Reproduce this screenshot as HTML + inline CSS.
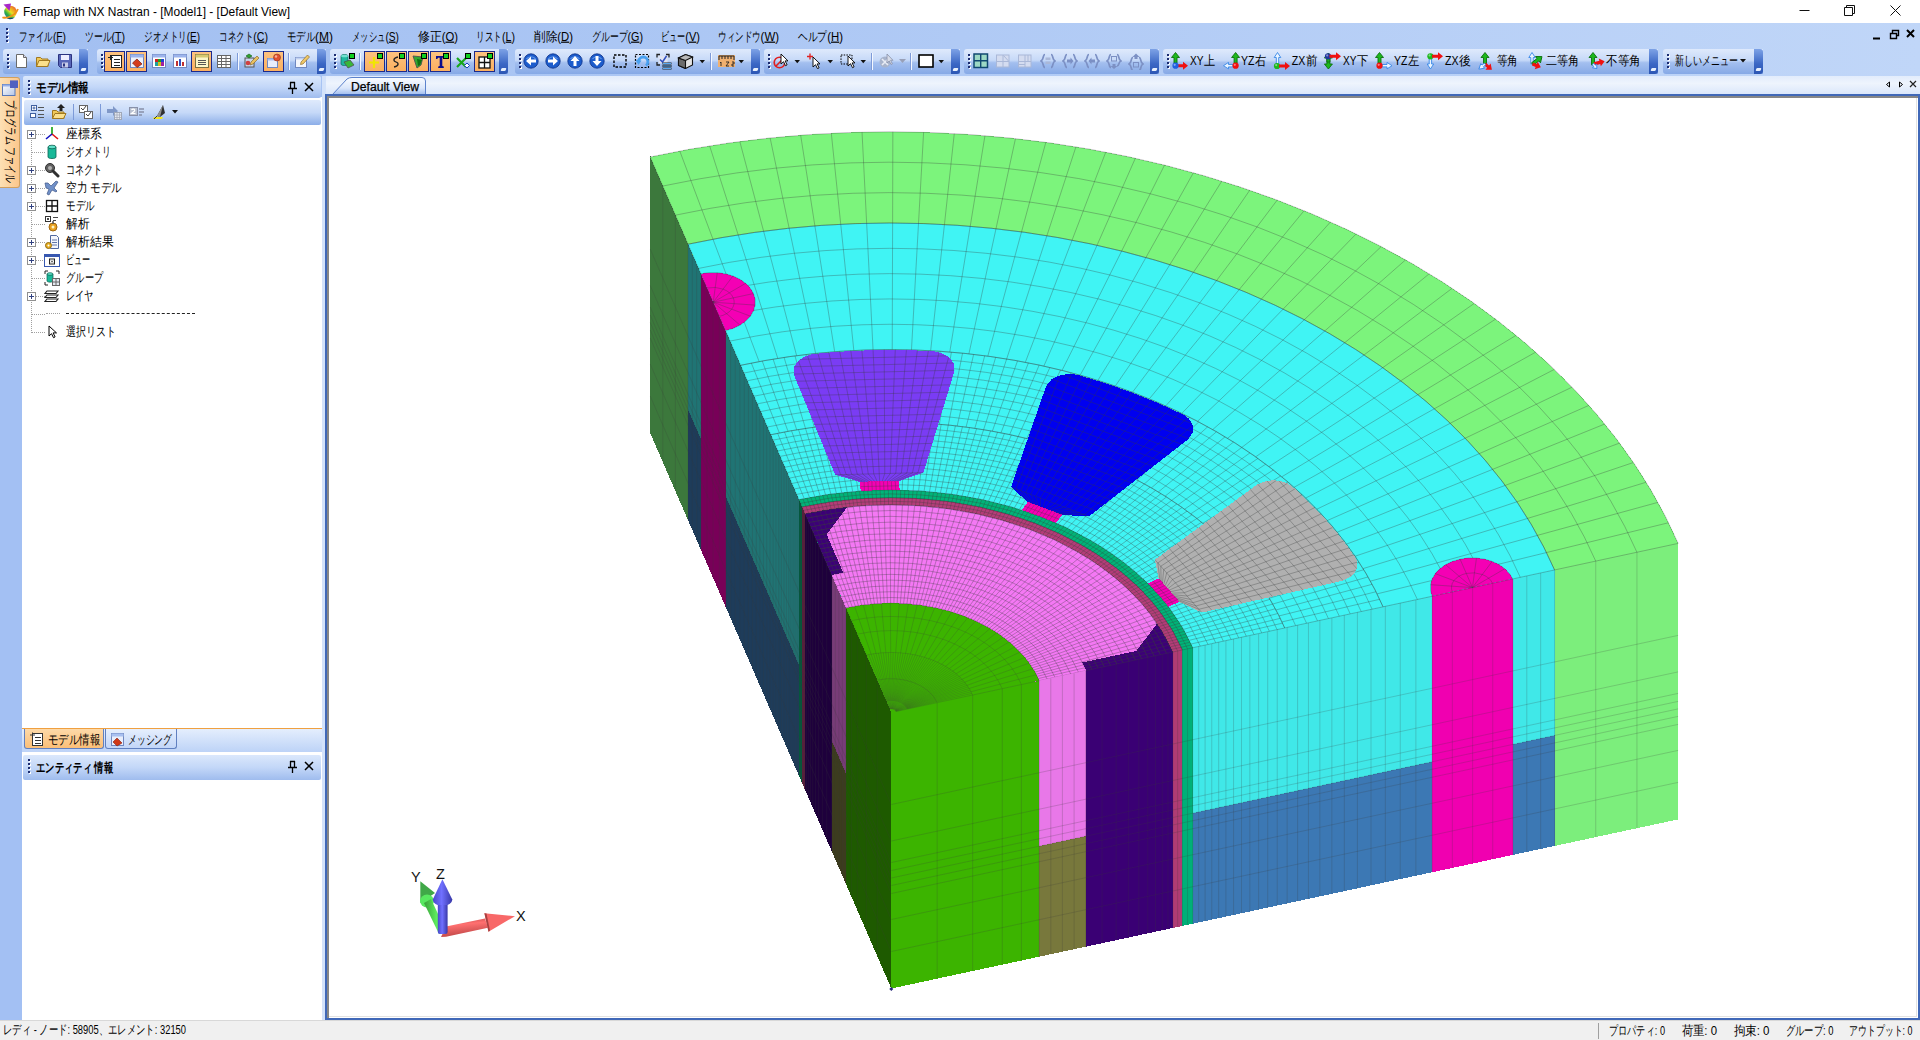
<!DOCTYPE html>
<html lang="ja"><head><meta charset="utf-8"><title>Femap with NX Nastran</title>
<style>
*{box-sizing:border-box;margin:0;padding:0}
html,body{width:1920px;height:1040px;overflow:hidden;background:#fff}
body{font-family:"Liberation Sans",sans-serif;font-size:12px;color:#000;position:relative}
.abs{position:absolute}
#title{left:0;top:0;width:1920px;height:23px;background:#fff}
#title .t{position:absolute;left:23px;top:4px;font-size:12.3px;white-space:nowrap;color:#000}
#frame{left:0;top:23px;width:1920px;height:74px;background:linear-gradient(90deg,#a2bff1 0%,#b0caf5 50%,#c0d6f8 100%)}
#menu{left:0;top:23px;width:1920px;height:24px}
#menu span{position:absolute;top:6px;font-size:12px;white-space:nowrap}
.grip{position:absolute;width:2px;background:repeating-linear-gradient(180deg,#1c2c70 0 2px,transparent 2px 4px);filter:drop-shadow(1px 1px 0 #fff)}
.tb{position:absolute;top:49px;height:25px;border-radius:3px 0 0 3px;background:linear-gradient(180deg,#dfeafc 0%,#c6d9f8 45%,#a3bfef 55%,#86a9e6 100%);}
.tb .cap{position:absolute;right:0;top:0;width:9px;height:25px;border-radius:0 3px 3px 0;background:linear-gradient(180deg,#7da2e6 0%,#3a66c4 60%,#2c56b4 100%)}
.tb .cap:after{content:"";position:absolute;left:2px;bottom:3px;width:5px;height:3px;background:#e8f0fc;border-radius:1px;transform:skewX(-20deg)}
.hl{position:absolute;top:51px;width:21px;height:21px;background:linear-gradient(180deg,#fdc280,#fbb060);border:1px solid #1c2a8c}
.ic{position:absolute;top:53px;width:16px;height:16px}
.tbt{position:absolute;top:55px;font-size:12px;white-space:nowrap}
#lstrip{left:0;top:76px;width:22px;height:944px;background:#a3c0f3}
#ltab{left:0;top:77px;width:20px;height:111px;background:linear-gradient(90deg,#fde0b4,#fbc78c);border:1px solid #d0a060;border-left:none;border-radius:0 3px 3px 0}
.phead{position:absolute;left:23px;width:298px;height:22px;border-radius:2px;background:linear-gradient(180deg,#dbe8fc 0%,#c3d7f8 50%,#9fbcee 100%)}
.phead b{position:absolute;left:13px;top:4px;font-size:12px;font-weight:bold;white-space:nowrap}
#ptool{left:24px;top:100px;width:297px;height:25px;border-radius:2px;background:linear-gradient(180deg,#dfeafc 0%,#c6d9f8 50%,#8caee8 100%)}
#tree{left:22px;top:125px;width:300px;height:604px;background:#fff}
.tr{position:absolute;left:66px;font-size:12.5px;white-space:nowrap}
.pm{position:absolute;left:27px;width:9px;height:9px;border:1px solid #909090;background:#fff}
.pm:before{content:"";position:absolute;left:1px;top:3px;width:5px;height:1px;background:#304080}
.pm:after{content:"";position:absolute;left:3px;top:1px;width:1px;height:5px;background:#304080}
#ptabs{left:22px;top:728px;width:300px;height:24px;background:linear-gradient(180deg,#e4eefd,#bdd3f7);border-top:1px solid #f0a040}
#ent{left:22px;top:780px;width:300px;height:240px;background:#fff}
#split{left:322px;top:76px;width:5px;height:944px;background:#d3e2fa}
#tabrow{left:326px;top:76px;width:1594px;height:21px;background:linear-gradient(180deg,#e2ecfc 0%,#eef4fd 35%,#d5e3fa 100%)}
#view{left:325px;top:94px;width:1595px;height:926px;background:#fff;border:2px solid #4068b8}
#view i{position:absolute;left:0;top:0;right:0;bottom:0;border:2px solid #868686;border-right:none;border-bottom:none;box-shadow:inset -1px -1px 0 #fff,inset -2px -2px 0 #e2e2e2}
#status{left:0;top:1020px;width:1920px;height:20px;background:#f0f0f0;border-top:1px solid #d8d8d8}
#status span{position:absolute;top:3px;font-size:12px;white-space:nowrap}
</style></head>
<body>
<div id="title" class="abs">
<svg class="abs" style="left:1px;top:2px" width="19" height="19" viewBox="0 0 19 19"><defs><linearGradient id="rb" x1="1" y1="0" x2="0" y2="1"><stop offset="0" stop-color="#e03030"/><stop offset=".3" stop-color="#f0a020"/><stop offset=".5" stop-color="#e8e020"/><stop offset=".7" stop-color="#30b040"/><stop offset="1" stop-color="#1860c0"/></linearGradient></defs><circle cx="9.500" cy="10" r="6.300" fill="url(#rb)"/><path d="M4 14.500a6.300 6.300 0 0 0 10 .5c-3 1.500-7 1.200-10-.5z" fill="#104868"/><path d="M1.500 15.500c4 1.500 13-2 15.500-8.500" fill="none" stroke="#f09018" stroke-width="1.700"/><path d="M2.500 2.500l7.500-1-1.500 7.500z" fill="#a828c8"/><path d="M1 15l3.500-.5-1.500 2z" fill="#f09018"/></svg>
<svg class="abs" style="left:1790px;top:0" width="130" height="23" viewBox="0 0 130 23"><path d="M9.5 10.5h10M54.5 7.5h8v8h-8zM56.5 7.5v-2h8v8h-2M100.5 5.5l10 10M110.5 5.5l-10 10" stroke="#111" stroke-width="1" fill="none"/></svg>
</div>
<div id="frame" class="abs"></div>
<div id="menu" class="abs"><div class="grip" style="left:6px;top:5px;height:15px"></div>
<svg class="abs" style="left:1868px;top:5px" width="50" height="14" viewBox="0 0 50 14"><path d="M5 10.5h7" stroke="#000" stroke-width="2"/><path d="M22.5 5.5h6v5h-6zM24.5 5.5v-3h6v5h-2" stroke="#000" stroke-width="1.4" fill="none"/><path d="M39 2l7 7M46 2l-7 7" stroke="#000" stroke-width="2"/></svg>
</div>
<div class="tb" style="left:3px;width:85px"><div class="grip" style="left:4px;top:5px;height:15px"></div><div class="cap"></div></div>
<div class="tb" style="left:97px;width:229px"><div class="grip" style="left:4px;top:5px;height:15px"></div><div class="cap"></div></div>
<div class="tb" style="left:330px;width:178px"><div class="grip" style="left:4px;top:5px;height:15px"></div><div class="cap"></div></div>
<div class="tb" style="left:515px;width:245px"><div class="grip" style="left:4px;top:5px;height:15px"></div><div class="cap"></div></div>
<div class="tb" style="left:764px;width:196px"><div class="grip" style="left:4px;top:5px;height:15px"></div><div class="cap"></div></div>
<div class="tb" style="left:964px;width:195px"><div class="grip" style="left:4px;top:5px;height:15px"></div><div class="cap"></div></div>
<div class="tb" style="left:1163px;width:495px"><div class="grip" style="left:4px;top:5px;height:15px"></div><div class="cap"></div></div>
<div class="tb" style="left:1663px;width:100px"><div class="grip" style="left:4px;top:5px;height:15px"></div><div class="cap"></div></div>
<div class="hl" style="left:104px"></div>
<div class="hl" style="left:126px"></div>
<div class="hl" style="left:191px"></div>
<div class="hl" style="left:263px"></div>
<div class="hl" style="left:364px"></div>
<div class="hl" style="left:386px"></div>
<div class="hl" style="left:408px"></div>
<div class="hl" style="left:430px"></div>
<div class="hl" style="left:474px"></div>
<svg class="abs" style="left:13px;top:53px" width="16" height="16" viewBox="0 0 16 16"><path d="M3.5 1.5h7l3 3v10h-10z" fill="#fff" stroke="#6a6a6a"/><path d="M10.5 1.5v3h3" fill="#dde" stroke="#6a6a6a"/></svg>
<svg class="abs" style="left:35px;top:53px" width="16" height="16" viewBox="0 0 16 16"><path d="M1.5 4.5h4l1.5 1.5h6v7.5h-11.5z" fill="#f0c858" stroke="#a07820"/><path d="M1.5 13.5l2.5-6h11l-2.5 6z" fill="#fbe08c" stroke="#a07820"/></svg>
<svg class="abs" style="left:57px;top:53px" width="16" height="16" viewBox="0 0 16 16"><path d="M1.5 1.5h13v13h-11l-2-2z" fill="#5866b8" stroke="#2c3480"/><rect x="4" y="2" width="8" height="5" fill="#eef"/><rect x="5" y="9.5" width="6" height="5" fill="#c8cce8"/><rect x="6" y="10.5" width="2" height="3" fill="#2c3480"/></svg>
<svg class="abs" style="left:107px;top:53px" width="16" height="16" viewBox="0 0 16 16"><rect x="4.5" y="2.5" width="10" height="12" fill="#fff" stroke="#222"/><path d="M1 4.5h5M3.5 2v5M7 6.5h6M7 9.5h6M7 12.5h6" stroke="#222" fill="none"/></svg>
<svg class="abs" style="left:129px;top:53px" width="16" height="16" viewBox="0 0 16 16"><rect x="1.5" y="1.5" width="13" height="13" fill="#eef2fc" stroke="#7088c0"/><rect x="1.5" y="1.5" width="13" height="3" fill="#9cb4ec"/><path d="M8 6l5 5-5 3.5-4.5-4.5z" fill="#d43c1c" stroke="#7a1c0c" stroke-width=".7"/></svg>
<svg class="abs" style="left:151px;top:53px" width="16" height="16" viewBox="0 0 16 16"><rect x="1.5" y="1.5" width="13" height="13" fill="#fff" stroke="#7088c0"/><rect x="1.5" y="1.5" width="13" height="3" fill="#9cb4ec"/><rect x="4" y="6" width="3" height="3" fill="#d02020"/><rect x="7" y="6" width="3" height="3" fill="#20a020"/><rect x="10" y="6" width="3" height="3" fill="#2040d0"/><rect x="4" y="9" width="3" height="4" fill="#20a0a0"/><rect x="7" y="9" width="3" height="4" fill="#d0c020"/><rect x="10" y="9" width="3" height="4" fill="#a020a0"/></svg>
<svg class="abs" style="left:172px;top:53px" width="16" height="16" viewBox="0 0 16 16"><rect x="1.5" y="1.5" width="13" height="13" fill="#fff" stroke="#7088c0"/><rect x="1.5" y="1.5" width="13" height="3" fill="#9cb4ec"/><path d="M4 13V8h2v5zM7 13V6h2v7zM10 13V9h2v4z" fill="#c03030"/><path d="M7 13V6h2v7z" fill="#3050c0"/></svg>
<svg class="abs" style="left:194px;top:53px" width="16" height="16" viewBox="0 0 16 16"><rect x="1.5" y="1.5" width="13" height="13" fill="#fdf6c8" stroke="#7a7040"/><rect x="1.5" y="1.5" width="13" height="3" fill="#d8c870"/><path d="M4 7.5h8M4 9.5h8M4 11.5h8" stroke="#555"/></svg>
<svg class="abs" style="left:216px;top:53px" width="16" height="16" viewBox="0 0 16 16"><rect x="1.5" y="2.5" width="13" height="12" fill="#fff" stroke="#666"/><path d="M1.5 5.5h13M1.5 8.5h13M1.5 11.5h13M5.5 2.5v12M10 2.5v12" stroke="#666" fill="none"/></svg>
<div class="abs" style="left:237px;top:53px;width:2px;height:17px;background:linear-gradient(90deg,#7d9ad8 50%,#f4f8ff 50%)"></div>
<svg class="abs" style="left:243px;top:53px" width="16" height="16" viewBox="0 0 16 16"><rect x="2" y="5" width="9" height="9" fill="#c8d4ec" stroke="#555"/><path d="M3 3l3-2 3 2-3 2z" fill="#30a030" stroke="#106010" stroke-width=".6"/><path d="M8 9l6-6 2 2-6 6-3 1z" fill="#e8c060" stroke="#806020" stroke-width=".6"/><circle cx="5" cy="10" r="2.3" fill="#d04040"/></svg>
<svg class="abs" style="left:266px;top:53px" width="16" height="16" viewBox="0 0 16 16"><rect x="1.5" y="5.5" width="10" height="9" fill="#e8eefc" stroke="#7088c0"/><rect x="1.5" y="5.5" width="10" height="2" fill="#a8bcec"/><circle cx="11" cy="4.5" r="3.5" fill="#e05030" stroke="#903018" stroke-width=".6"/><circle cx="10" cy="3.5" r="1.2" fill="#f8b098"/></svg>
<div class="abs" style="left:288px;top:53px;width:2px;height:17px;background:linear-gradient(90deg,#7d9ad8 50%,#f4f8ff 50%)"></div>
<svg class="abs" style="left:294px;top:53px" width="16" height="16" viewBox="0 0 16 16"><rect x="1.5" y="4.5" width="11" height="10" fill="#f4f6fc" stroke="#7088c0"/><rect x="1.5" y="4.5" width="11" height="2" fill="#c0d0f0"/><path d="M7 9l6.5-7 2 2-6.5 7-2.5.5z" fill="#f0c868" stroke="#806020" stroke-width=".6"/></svg>
<div class="abs" style="left:359px;top:53px;width:2px;height:17px;background:linear-gradient(90deg,#7d9ad8 50%,#f4f8ff 50%)"></div>
<svg class="abs" style="left:339px;top:53px" width="17" height="16" viewBox="0 0 17 16"><path d="M2 3c0-2 7-2 7 0v8c0 2-7 2-7 0z" fill="#20b8a0" stroke="#0a6858" stroke-width=".7"/><ellipse cx="5.5" cy="3" rx="3.5" ry="1.3" fill="#70e0d0"/><path d="M5 9l6-2 4 5-6 3z" fill="#38b838" stroke="#505050" stroke-width=".8"/><rect x="10.5" y=".5" width="5" height="5" fill="#10d020" stroke="#000"/></svg>
<svg class="abs" style="left:367px;top:53px" width="16" height="16" viewBox="0 0 16 16"><path d="M2 9.5h10M7 4v11" stroke="#f0e800" stroke-width="2.2"/><rect x="10.5" y=".5" width="5" height="5" fill="#10d020" stroke="#000"/></svg>
<svg class="abs" style="left:389px;top:53px" width="16" height="16" viewBox="0 0 16 16"><path d="M9 4C4 5 4 8 7 9s3 4-2 5" stroke="#222" stroke-width="1.3" fill="none"/><rect x="10.5" y=".5" width="5" height="5" fill="#10d020" stroke="#000"/></svg>
<svg class="abs" style="left:411px;top:53px" width="16" height="16" viewBox="0 0 16 16"><path d="M2 3l10 1-2 8-4 3z" fill="#30a830" stroke="#505050" stroke-width=".9"/><path d="M6 6l5 1-2 5-2 1z" fill="#107010"/><rect x="10.5" y=".5" width="5" height="5" fill="#10d020" stroke="#000"/></svg>
<svg class="abs" style="left:433px;top:53px" width="16" height="16" viewBox="0 0 16 16"><path d="M3 3h10v3h-1.3l-.7-1.3H9.3V13l1.5.6V15H5.2v-1.4l1.5-.6V4.7H5l-.7 1.3H3z" fill="#0c0c8c"/><rect x="10.5" y=".5" width="5" height="5" fill="#10d020" stroke="#000"/></svg>
<svg class="abs" style="left:455px;top:53px" width="16" height="16" viewBox="0 0 16 16"><path d="M2 5l9 9M11 5l-9 9" stroke="#18a818" stroke-width="2.2"/><path d="M12 10l2.5 2.5-2.5 2.5-2.5-2.5z" fill="#fff" stroke="#1840c0"/><rect x="10.5" y=".5" width="5" height="5" fill="#10d020" stroke="#000"/></svg>
<svg class="abs" style="left:477px;top:53px" width="16" height="16" viewBox="0 0 16 16"><rect x="2" y="4" width="11" height="11" fill="#fff" stroke="#111" stroke-width="1.3"/><path d="M7.5 4v11M2 9.5h11" stroke="#111" stroke-width="1.3"/><rect x="10.5" y=".5" width="5" height="5" fill="#10d020" stroke="#000"/></svg>
<svg class="abs" style="left:523px;top:53px" width="16" height="16" viewBox="0 0 16 16"><circle cx="8" cy="8" r="7.2" fill="#1c5ccc" stroke="#0c3088" stroke-width=".8"/><path d="M3.5 6a5 4 0 0 1 9 0" fill="none" stroke="#80b0f4" stroke-width="1.2" opacity=".7"/><path d="M3 8l5-4.5v3h5v3H8v3z" fill="#fff"/></svg>
<svg class="abs" style="left:545px;top:53px" width="16" height="16" viewBox="0 0 16 16"><circle cx="8" cy="8" r="7.2" fill="#1c5ccc" stroke="#0c3088" stroke-width=".8"/><path d="M3.5 6a5 4 0 0 1 9 0" fill="none" stroke="#80b0f4" stroke-width="1.2" opacity=".7"/><path d="M13 8l-5-4.5v3H3v3h5v3z" fill="#fff"/></svg>
<svg class="abs" style="left:567px;top:53px" width="16" height="16" viewBox="0 0 16 16"><circle cx="8" cy="8" r="7.2" fill="#1c5ccc" stroke="#0c3088" stroke-width=".8"/><path d="M3.5 6a5 4 0 0 1 9 0" fill="none" stroke="#80b0f4" stroke-width="1.2" opacity=".7"/><path d="M8 3l4.5 5h-3v5h-3V8h-3z" fill="#fff"/></svg>
<svg class="abs" style="left:589px;top:53px" width="16" height="16" viewBox="0 0 16 16"><circle cx="8" cy="8" r="7.2" fill="#1c5ccc" stroke="#0c3088" stroke-width=".8"/><path d="M3.5 6a5 4 0 0 1 9 0" fill="none" stroke="#80b0f4" stroke-width="1.2" opacity=".7"/><path d="M8 13l4.5-5h-3V3h-3v5h-3z" fill="#fff"/></svg>
<svg class="abs" style="left:612px;top:53px" width="16" height="16" viewBox="0 0 16 16"><rect x="2" y="2" width="12" height="12" fill="none" stroke="#000" stroke-width="1.4" stroke-dasharray="2.5 1.5"/></svg>
<svg class="abs" style="left:634px;top:53px" width="16" height="16" viewBox="0 0 16 16"><rect x="1.500" y="1.500" width="13" height="13" fill="none" stroke="#000" stroke-width="1.200" stroke-dasharray="2 1.500"/><path d="M12 12.500a4.700 4.700 0 1 0-7.500-4" stroke="#48a0f0" stroke-width="2.800" fill="none"/><path d="M1.500 7l6 .5-3 4.500z" fill="#48a0f0"/></svg>
<svg class="abs" style="left:656px;top:53px" width="16" height="17" viewBox="0 0 16 17"><path d="M1 4.500V1.500H4M10 1.500h3V4.500M1 9v3H4" stroke="#222" stroke-width="1.300" fill="none"/><rect x="2.500" y="3" width="9" height="7.500" fill="#dfe4f2"/><path d="M4 6.500l2.500 2.500 4-6" stroke="#3050c0" stroke-width="1.500" fill="none"/><path d="M6.500 10.500h9M6.500 13h9M6.500 15.500h9" stroke="#222" stroke-width="2.200"/><path d="M7 10.500h8M7 13h8M7 15.500h8" stroke="#58a8f0" stroke-width="1.100"/></svg>
<svg class="abs" style="left:677px;top:53px" width="17" height="16" viewBox="0 0 17 16"><path d="M1.500 5l7-3.500 7 2.500v8l-7 3.500-7-3z" fill="#e4e4e4" stroke="#111" stroke-width="1.100"/><path d="M1.500 5l7 2.500v8l-7-3z" fill="#6c6c6c" stroke="#111" stroke-width="1.100"/><path d="M1.500 5l7-3.500 7 2.500-7 3.500z" fill="#b8b8b8" stroke="#111" stroke-width="1.100"/></svg>
<svg class="abs" style="left:699px;top:60px" width="7" height="4"><path d="M.5 0h5.500l-2.750 3.200z" fill="#111"/></svg>
<div class="abs" style="left:710px;top:53px;width:2px;height:17px;background:linear-gradient(90deg,#7d9ad8 50%,#f4f8ff 50%)"></div>
<svg class="abs" style="left:718px;top:53px" width="18" height="16" viewBox="0 0 18 16"><rect x="0" y="2" width="17" height="12" fill="#f0b070"/><path d="M1 3h15M1 3v4M4 3v3M7 3v3M10 3v3M13 3v3M16 3v4" stroke="#222" fill="none"/><path d="M3 13v-4l-1 1M8 9h3l-3 4h3M14 9h2v2h-2v2h2" stroke="#222" fill="none" stroke-width=".9"/></svg>
<svg class="abs" style="left:738px;top:60px" width="7" height="4"><path d="M.5 0h5.500l-2.750 3.200z" fill="#111"/></svg>
<svg class="abs" style="left:773px;top:53px" width="16" height="16" viewBox="0 0 16 16"><circle cx="6.5" cy="9.5" r="5.3" fill="none" stroke="#e02020" stroke-width="1.6"/><path d="M3 13l7-7" stroke="#e02020" stroke-width="1.6"/><path d="M8 1v10l2.5-2.3 2 4 1.6-.8-2-4H15z" fill="#fff" stroke="#000" stroke-width=".9"/></svg>
<svg class="abs" style="left:794px;top:60px" width="7" height="4"><path d="M.5 0h5.500l-2.750 3.200z" fill="#111"/></svg>
<svg class="abs" style="left:806px;top:53px" width="16" height="16" viewBox="0 0 16 16"><path d="M1 3.5h6M4 .5v6" stroke="#e02020" stroke-width="1.3"/><path d="M7 4v10l2.5-2.3 2 4 1.6-.8-2-4H14z" fill="#fff" stroke="#000" stroke-width=".9"/></svg>
<svg class="abs" style="left:827px;top:60px" width="7" height="4"><path d="M.5 0h5.500l-2.750 3.200z" fill="#111"/></svg>
<svg class="abs" style="left:840px;top:53px" width="16" height="16" viewBox="0 0 16 16"><rect x="1" y="2" width="11" height="9" fill="none" stroke="#000" stroke-dasharray="1.5 1.2"/><path d="M8 5v10l2.5-2.3 2 4 1.6-.8-2-4H15z" fill="#fff" stroke="#000" stroke-width=".9" transform="translate(0,-2)"/></svg>
<svg class="abs" style="left:860px;top:60px" width="7" height="4"><path d="M.5 0h5.500l-2.750 3.200z" fill="#111"/></svg>
<div class="abs" style="left:871px;top:53px;width:2px;height:17px;background:linear-gradient(90deg,#7d9ad8 50%,#f4f8ff 50%)"></div>
<svg class="abs" style="left:878px;top:53px" width="16" height="16" viewBox="0 0 16 16"><circle cx="7" cy="9" r="5.5" fill="#a8b4cc"/><path d="M4 6l6 6M10 6l-6 6" stroke="#e8ecf4" stroke-width="1.6"/><path d="M9 1v9l2.2-2 1.8 3.5 1.4-.7-1.8-3.5H15z" fill="#d8dce8" stroke="#8890a8" stroke-width=".8"/></svg>
<svg class="abs" style="left:899px;top:59px" width="7" height="4"><path d="M0 0h7l-3.5 4z" fill="#98a0b8"/></svg>
<div class="abs" style="left:910px;top:53px;width:2px;height:17px;background:linear-gradient(90deg,#7d9ad8 50%,#f4f8ff 50%)"></div>
<svg class="abs" style="left:918px;top:53px" width="16" height="16" viewBox="0 0 16 16"><rect x="1" y="2" width="14" height="12" fill="#fff" stroke="#000" stroke-width="1.6"/></svg>
<svg class="abs" style="left:938px;top:60px" width="7" height="4"><path d="M.5 0h5.500l-2.750 3.200z" fill="#111"/></svg>
<svg class="abs" style="left:973px;top:53px" width="16" height="16" viewBox="0 0 16 16"><rect x="1" y="1" width="13.5" height="13.5" fill="#9cd8c4" stroke="#104870" stroke-width="1.5"/><path d="M7.700 1v13.500M1 7.700h13.500" stroke="#104870" stroke-width="1.400"/></svg>
<svg class="abs" style="left:995px;top:53px" width="16" height="16" viewBox="0 0 16 16"><rect x="1" y="1.500" width="13.500" height="13" fill="#aab8d8"/><path d="M2 2.500h5.500v5.500H2zM8.500 2.500h5v5.500h-5zM2 9h5.500v4.500H2zM8.500 9h5v4.500h-5z" fill="#d4dcf0"/><path d="M8.500 2.500l5 5.500" stroke="#aab8d8"/></svg>
<svg class="abs" style="left:1017px;top:53px" width="16" height="16" viewBox="0 0 16 16"><rect x="1" y="1.500" width="13.500" height="13" fill="#aab8d8"/><path d="M2 2.500h5.500v5.500H2zM8.500 2.500h2v5.500h-2zM11.500 2.500h2v5.500h-2zM2 9h5.500v2H2zM2 12h5.500v1.500H2zM8.500 9h5v4.500h-5z" fill="#d4dcf0"/></svg>
<svg class="abs" style="left:1040px;top:53px" width="16" height="16" viewBox="0 0 16 16"><path d="M5 1.500C2.500 1.500 4 7 1 8c3 1 1.500 6.500 4 6.500M11 1.500c2.500 0 1 5.500 4 6.500-3 1-1.500 6.500-4 6.500" fill="none" stroke="#7c90c4" stroke-width="1.700"/><rect x="5.500" y="4.500" width="5" height="2.500" fill="#aab8d8"/><rect x="5.500" y="8.500" width="5" height="2.500" fill="#aab8d8"/></svg>
<svg class="abs" style="left:1062px;top:53px" width="16" height="16" viewBox="0 0 16 16"><path d="M5 1.500C2.500 1.500 4 7 1 8c3 1 1.500 6.500 4 6.500M11 1.500c2.500 0 1 5.500 4 6.500-3 1-1.500 6.500-4 6.500" fill="none" stroke="#7c90c4" stroke-width="1.700"/><path d="M5 6.500h3.500v-2l3 3.500-3 3.500v-2H5z" fill="#7c90c4"/></svg>
<svg class="abs" style="left:1084px;top:53px" width="16" height="16" viewBox="0 0 16 16"><path d="M5 1.500C2.500 1.500 4 7 1 8c3 1 1.500 6.500 4 6.500M11 1.500c2.500 0 1 5.500 4 6.500-3 1-1.500 6.500-4 6.500" fill="none" stroke="#7c90c4" stroke-width="1.700"/><path d="M11 6.500H7.500v-2l-3 3.500 3 3.500v-2H11z" fill="#7c90c4"/></svg>
<svg class="abs" style="left:1106px;top:53px" width="16" height="16" viewBox="0 0 16 16"><path d="M5 1.500C2.500 1.500 4 7 1 8c3 1 1.500 6.500 4 6.500M11 1.500c2.500 0 1 5.500 4 6.500-3 1-1.500 5-4 5" fill="none" stroke="#7c90c4" stroke-width="1.700"/><rect x="5.500" y="3.500" width="5" height="4.500" fill="none" stroke="#7c90c4"/><path d="M6.500 11h3v2h2l-3.500 3-3.500-3h2z" fill="#7c90c4"/></svg>
<svg class="abs" style="left:1128px;top:53px" width="16" height="17" viewBox="0 0 16 17"><g transform="translate(0,3)"><path d="M5 1.500C2.500 1.500 4 7 1 8c3 1 1.500 6.500 4 6.500M11 1.500c2.500 0 1 5.500 4 6.500-3 1-1.500 6.500-4 6.500" fill="none" stroke="#7c90c4" stroke-width="1.700"/></g><rect x="5.500" y="9.500" width="5" height="4.500" fill="none" stroke="#7c90c4"/><path d="M6.500 6v-2h-2l3.500-3.500 3.500 3.500h-2v2z" fill="#7c90c4"/></svg>
<svg class="abs" style="left:1171px;top:52px" width="20" height="18" viewBox="0 0 20 18"><polygon points="3.0,11.0 3.0,5.5 0.5,5.5 4.5,0.5 8.5,5.5 6.0,5.5 6.0,11.0" fill="#1cb81c" stroke="#0c7010" stroke-width=".9"/><polygon points="7.0,12.2 12.0,12.2 12.0,9.7 17.0,13.7 12.0,17.7 12.0,15.2 7.0,15.2" fill="#f01010"/><circle cx="4.5" cy="13.7" r="3.1" fill="#2060e0"/><circle cx="3.7" cy="12.799999999999999" r="1.1" fill="#fff" opacity=".45"/></svg>

<svg class="abs" style="left:1222px;top:52px" width="20" height="18" viewBox="0 0 20 18"><polygon points="12.1,11.0 12.1,5.5 9.6,5.5 13.6,0.5 17.6,5.5 15.1,5.5 15.1,11.0" fill="#1cb81c" stroke="#0c7010" stroke-width=".9"/><polygon points="11.0,12.5 6.5,12.5 6.5,10.4 1.5,13.7 6.5,16.9 6.5,14.9 11.0,14.9" fill="#eaf4ff" stroke="#3888e8" stroke-width=".9"/><circle cx="13.6" cy="13.7" r="3.1" fill="#f01010"/><circle cx="12.799999999999999" cy="12.799999999999999" r="1.1" fill="#fff" opacity=".45"/></svg>

<svg class="abs" style="left:1273px;top:52px" width="20" height="18" viewBox="0 0 20 18"><polygon points="3.3,12.0 3.3,5.5 1.2,5.5 4.5,0.5 7.8,5.5 5.7,5.5 5.7,12.0" fill="#eaf4ff" stroke="#3888e8" stroke-width=".9"/><circle cx="4" cy="14" r="3.1" fill="#1cb81c"/><circle cx="3.2" cy="13.1" r="1.1" fill="#fff" opacity=".45"/><polygon points="6.0,12.5 12.0,12.5 12.0,10.0 17.0,14.0 12.0,18.0 12.0,15.5 6.0,15.5" fill="#f01010"/></svg>

<svg class="abs" style="left:1324px;top:52px" width="20" height="18" viewBox="0 0 20 18"><polygon points="2.9,5.0 2.9,12.0 0.4,12.0 4.4,17.0 8.4,12.0 5.9,12.0 5.9,5.0" fill="#1cb81c" stroke="#0c7010" stroke-width=".9"/><polygon points="2.9,10.0 2.9,6.0 0.4,6.0 4.4,1.0 8.4,6.0 5.9,6.0 5.9,10.0" fill="#1cb81c" stroke="#0c7010" stroke-width=".9"/><circle cx="4" cy="4.3" r="3.1" fill="#2038a0"/><circle cx="3.2" cy="3.4" r="1.1" fill="#fff" opacity=".45"/><polygon points="5.5,2.8 12.0,2.8 12.0,0.3 17.0,4.3 12.0,8.3 12.0,5.8 5.5,5.8" fill="#f01010"/></svg>

<svg class="abs" style="left:1375px;top:52px" width="20" height="18" viewBox="0 0 20 18"><polygon points="3.0,11.0 3.0,5.5 0.5,5.5 4.5,0.5 8.5,5.5 6.0,5.5 6.0,11.0" fill="#1cb81c" stroke="#0c7010" stroke-width=".9"/><polygon points="7.0,12.5 12.0,12.5 12.0,10.4 17.0,13.7 12.0,16.9 12.0,14.9 7.0,14.9" fill="#eaf4ff" stroke="#3888e8" stroke-width=".9"/><circle cx="4.5" cy="13.7" r="3.1" fill="#f01010"/><circle cx="3.7" cy="12.799999999999999" r="1.1" fill="#fff" opacity=".45"/></svg>

<svg class="abs" style="left:1426px;top:52px" width="20" height="18" viewBox="0 0 20 18"><polygon points="3.2,6.0 3.2,12.0 1.2,12.0 4.4,17.0 7.7,12.0 5.6,12.0 5.6,6.0" fill="#eaf4ff" stroke="#3888e8" stroke-width=".9"/><circle cx="4.4" cy="4.3" r="3.1" fill="#1cb81c"/><circle cx="3.6000000000000005" cy="3.4" r="1.1" fill="#fff" opacity=".45"/><polygon points="6.0,2.8 12.0,2.8 12.0,0.3 17.0,4.3 12.0,8.3 12.0,5.8 6.0,5.8" fill="#f01010"/></svg>

<svg class="abs" style="left:1477px;top:52px" width="20" height="18" viewBox="0 0 20 18"><polygon points="6.5,12.0 6.5,5.5 4.0,5.5 8.0,0.5 12.0,5.5 9.5,5.5 9.5,12.0" fill="#1cb81c" stroke="#0c7010" stroke-width=".9"/><g transform="rotate(40 8 12)"><polygon points="8.0,10.5 12.0,10.5 12.0,8.0 17.0,12.0 12.0,16.0 12.0,13.5 8.0,13.5" fill="#f01010"/></g><g transform="rotate(-40 8 12)"><polygon points="8.0,10.9 5.0,10.9 5.0,9.0 0.0,12.0 5.0,15.0 5.0,13.1 8.0,13.1" fill="#eaf4ff" stroke="#3888e8" stroke-width=".9"/></g></svg>

<svg class="abs" style="left:1527px;top:52px" width="20" height="18" viewBox="0 0 20 18"><polygon points="3.8,12.0 3.8,5.5 1.8,5.5 5.0,0.5 8.2,5.5 6.2,5.5 6.2,12.0" fill="#eaf4ff" stroke="#3888e8" stroke-width=".9"/><g transform="rotate(-38 5.5 12)"><polygon points="5.5,10.5 12.5,10.5 12.5,8.0 17.5,12.0 12.5,16.0 12.5,13.5 5.5,13.5" fill="#1cb81c" stroke="#0c7010" stroke-width=".9"/></g><g transform="rotate(22 5.5 12)"><polygon points="5.5,10.5 9.5,10.5 9.5,8.0 14.5,12.0 9.5,16.0 9.5,13.5 5.5,13.5" fill="#f01010"/></g></svg>

<svg class="abs" style="left:1588px;top:52px" width="20" height="18" viewBox="0 0 20 18"><polygon points="3.5,13.0 3.5,5.5 1.0,5.5 5.0,0.5 9.0,5.5 6.5,5.5 6.5,13.0" fill="#1cb81c" stroke="#0c7010" stroke-width=".9"/><g transform="rotate(-15 6 12)"><polygon points="6.0,10.3 12.0,10.3 12.0,8.0 17.0,12.0 12.0,16.0 12.0,13.7 6.0,13.7" fill="#f01010"/></g><g transform="rotate(50 5 12)"><polygon points="5.0,10.9 7.5,10.9 7.5,9.2 11.0,12.0 7.5,14.8 7.5,13.1 5.0,13.1" fill="#eaf4ff" stroke="#3888e8" stroke-width=".9"/></g></svg>


<svg class="abs" style="left:1740px;top:59px" width="6" height="4"><path d="M0 0h6l-3 3.500z" fill="#111"/></svg>
<div id="lstrip" class="abs"></div><div id="ltab" class="abs"></div>
<svg class="abs" style="left:2px;top:80px" width="17" height="17" viewBox="0 0 17 17"><defs><linearGradient id="wg" x1="0" y1="0" x2="1" y2="1"><stop offset="0" stop-color="#fff"/><stop offset="1" stop-color="#b4c4e4"/></linearGradient></defs><rect x=".5" y="4.500" width="12.500" height="11" fill="url(#wg)" stroke="#5878b8"/><rect x=".5" y="4.500" width="12.500" height="2" fill="#98b0e8"/><rect x="8" y=".5" width="8" height="7.500" fill="#3848b0"/><rect x="8" y=".5" width="8" height="7.500" fill="#8090e0" opacity=".35"/></svg>
<div class="phead" style="top:76px"><div class="grip" style="left:5px;top:4px;height:14px"></div><svg class="abs" style="left:262px;top:4px" width="34" height="15" viewBox="0 0 34 15"><path d="M5.5 2v6M9.5 2v6M5 2.5h5M3 8.5h9M7.5 9v5" stroke="#000" stroke-width="1.3" fill="none"/><path d="M20 3l8 8M28 3l-8 8" stroke="#000" stroke-width="1.5"/></svg></div>
<div id="ptool" class="abs"></div>
<svg class="abs" style="left:29px;top:104px" width="16" height="16" viewBox="0 0 16 16"><rect x="2.5" y="1.5" width="5" height="5" fill="#fff" stroke="#4060a0"/><path d="M3.500 4h3M5 2.500v3" stroke="#4060a0"/><rect x="1.5" y="9.5" width="5" height="4" fill="#fff" stroke="#4060a0"/><path d="M9 3.500h6M9 6.500h6M9 10.500h6M9 13.500h6" stroke="#555"/></svg>
<svg class="abs" style="left:51px;top:104px" width="16" height="16" viewBox="0 0 16 16"><path d="M1.5 6.5h4l1.500 1.500h6v6.500h-11.500z" fill="#f0c858" stroke="#a07820"/><path d="M1.500 14.500l2.500-5h11l-2.500 5z" fill="#fbe08c" stroke="#a07820"/><path d="M10 0l4 4h-2.500v3h-3V4H6z" fill="#222"/></svg>
<div class="abs" style="left:73px;top:104px;width:1px;height:16px;background:#7d9ad8"></div>
<svg class="abs" style="left:78px;top:104px" width="16" height="16" viewBox="0 0 16 16"><rect x="1.500" y="1.500" width="8" height="7" fill="#fff" stroke="#666"/><path d="M3 4l2 2 3-4" stroke="#444" fill="none"/><rect x="6.500" y="7.500" width="8" height="7" fill="#fff" stroke="#666"/><path d="M8 10l2 2 3-4" stroke="#444" fill="none"/></svg>
<div class="abs" style="left:100px;top:104px;width:1px;height:16px;background:#7d9ad8"></div>
<svg class="abs" style="left:106px;top:104px" width="16" height="16" viewBox="0 0 16 16"><path d="M1 5h6V2l5 5-5 5V9H1z" fill="#8098c8"/><rect x="8.500" y="8.500" width="7" height="7" fill="#e4e8f0" stroke="#a0a8b8"/><path d="M8.500 11h7M8.500 13.500h7M11 8.500v7M13.500 8.500v7" stroke="#a0a8b8" stroke-width=".7"/></svg>
<svg class="abs" style="left:129px;top:104px" width="16" height="16" viewBox="0 0 16 16"><rect x=".5" y="3.500" width="8" height="8" fill="#b8c0d0" stroke="#8890a8"/><path d="M2.500 6c1-1.500 4-1 3 1l-3 2.500h4" stroke="#fff" fill="none" stroke-width="1.200"/><path d="M10 5h5M10 8h5M10 11h3" stroke="#8890a8" stroke-width="1.500"/></svg>
<svg class="abs" style="left:151px;top:104px" width="17" height="16" viewBox="0 0 17 16"><path d="M2 15h9l1-2H3z" fill="#f4e820"/><path d="M12 1l2 8-5 4-3-1z" fill="#303030"/><path d="M12 1l-6 11 3 1z" fill="#909090"/><path d="M6 12l-3 3" stroke="#303030"/></svg>
<svg class="abs" style="left:172px;top:110px" width="7" height="4"><path d="M0 0h6l-3 3.500z" fill="#111"/></svg>
<div id="tree" class="abs"></div>
<div class="abs" style="left:31px;top:134px;width:0;height:199px;border-left:1px dotted #a0a0a0"></div>
<div class="abs" style="left:32px;top:134px;width:13px;height:0;border-top:1px dotted #a0a0a0"></div>
<div class="pm" style="top:130px"></div>
<div class="abs" style="left:32px;top:152px;width:13px;height:0;border-top:1px dotted #a0a0a0"></div>
<div class="abs" style="left:32px;top:170px;width:13px;height:0;border-top:1px dotted #a0a0a0"></div>
<div class="pm" style="top:166px"></div>
<div class="abs" style="left:32px;top:188px;width:13px;height:0;border-top:1px dotted #a0a0a0"></div>
<div class="pm" style="top:184px"></div>
<div class="abs" style="left:32px;top:206px;width:13px;height:0;border-top:1px dotted #a0a0a0"></div>
<div class="pm" style="top:202px"></div>
<div class="abs" style="left:32px;top:224px;width:13px;height:0;border-top:1px dotted #a0a0a0"></div>
<div class="abs" style="left:32px;top:242px;width:13px;height:0;border-top:1px dotted #a0a0a0"></div>
<div class="pm" style="top:238px"></div>
<div class="abs" style="left:32px;top:260px;width:13px;height:0;border-top:1px dotted #a0a0a0"></div>
<div class="pm" style="top:256px"></div>
<div class="abs" style="left:32px;top:278px;width:13px;height:0;border-top:1px dotted #a0a0a0"></div>
<div class="abs" style="left:32px;top:296px;width:13px;height:0;border-top:1px dotted #a0a0a0"></div>
<div class="pm" style="top:292px"></div>
<div class="abs" style="left:32px;top:314px;width:13px;height:0;border-top:1px dotted #a0a0a0"></div>
<div class="abs" style="left:32px;top:332px;width:13px;height:0;border-top:1px dotted #a0a0a0"></div>
<div class="abs" style="left:66px;top:313px;width:129px;height:0;border-top:1px dashed #222"></div>
<div class="abs" style="left:46px;top:313px;width:14px;height:0;border-top:1px dotted #a0a0a0"></div>
<svg class="abs" style="left:44px;top:126px" width="16" height="16" viewBox="0 0 16 16"><path d="M8 8V1" stroke="#10a010" stroke-width="1.600"/><path d="M8 8l6 5" stroke="#e01010" stroke-width="1.600"/><path d="M8 8L2 13" stroke="#1010c0" stroke-width="1.600"/></svg>
<svg class="abs" style="left:44px;top:144px" width="16" height="16" viewBox="0 0 16 16"><path d="M4 3v10c0 2 8 2 8 0V3" fill="#18b898" stroke="#0a6050" stroke-width=".8"/><ellipse cx="8" cy="3" rx="4" ry="1.800" fill="#60e0c8" stroke="#0a6050" stroke-width=".8"/></svg>
<svg class="abs" style="left:44px;top:162px" width="16" height="16" viewBox="0 0 16 16"><circle cx="6" cy="6" r="4.500" fill="#606060" stroke="#303030"/><circle cx="6" cy="6" r="2" fill="#b0b0b0"/><path d="M9 9l5 5" stroke="#303030" stroke-width="3" stroke-linecap="round"/></svg>
<svg class="abs" style="left:44px;top:180px" width="16" height="16" viewBox="0 0 16 16"><path d="M1 3l3 0 3 3 5-5 2 1-4 6 3 3-1 1-4-2-3 5-2-1 2-5-3-1z" fill="#7090c8" stroke="#405888" stroke-width=".7"/></svg>
<svg class="abs" style="left:44px;top:198px" width="16" height="16" viewBox="0 0 16 16"><rect x="2.500" y="2.500" width="11" height="11" fill="#fff" stroke="#111" stroke-width="1.300"/><path d="M8 2.500v11M2.500 8h11" stroke="#111" stroke-width="1.300"/></svg>
<svg class="abs" style="left:44px;top:216px" width="16" height="16" viewBox="0 0 16 16"><rect x="1.500" y=".5" width="5" height="5" fill="#fff" stroke="#333"/><path d="M3 2l2 2M5 2l-2 2M9 1.500h5M9 4.500h3" stroke="#333" stroke-width=".9"/><circle cx="9" cy="11" r="4" fill="#e8a020" stroke="#a06810"/><circle cx="9" cy="11" r="1.500" fill="#fff4c0"/><path d="M9 5v3" stroke="#555" stroke-width="1.500"/></svg>
<svg class="abs" style="left:44px;top:234px" width="16" height="16" viewBox="0 0 16 16"><path d="M6.500 1.500h6l2 2v11h-8z" fill="#f4f6fc" stroke="#5068a0"/><path d="M8 6h5M8 8.500h5M8 11h5" stroke="#5068a0" stroke-width=".9"/><circle cx="4.500" cy="11.500" r="3" fill="#e8b020" stroke="#906810"/><circle cx="4.500" cy="11.500" r="1" fill="#fff"/></svg>
<svg class="abs" style="left:44px;top:252px" width="16" height="16" viewBox="0 0 16 16"><rect x=".5" y="2.500" width="15" height="12" fill="#fff" stroke="#3858b0"/><rect x=".5" y="2.500" width="15" height="2.500" fill="#3858b0"/><rect x="5.500" y="7" width="5" height="5" fill="none" stroke="#222"/><path d="M7 8.500l2 2M9 8.500l-2 2" stroke="#222" stroke-width=".8"/></svg>
<svg class="abs" style="left:44px;top:270px" width="16" height="16" viewBox="0 0 16 16"><path d="M1 1h3M1 1v3M15 1h-3M15 1v3M1 15h3M1 15v-3" stroke="#222" fill="none"/><path d="M3 4v7c0 1.500 6 1.500 6 0V4" fill="#18b898" stroke="#0a6050" stroke-width=".7"/><ellipse cx="6" cy="4" rx="3" ry="1.300" fill="#60e0c8" stroke="#0a6050" stroke-width=".7"/><rect x="8.500" y="8.500" width="7" height="7" fill="#e4e8f0" stroke="#666"/><path d="M12 8.500v7M8.500 12h7" stroke="#666"/></svg>
<svg class="abs" style="left:44px;top:288px" width="16" height="16" viewBox="0 0 16 16"><path d="M3 3h11l-2 2.500H1zM3 7h11l-2 2.500H1zM3 11h11l-2 2.500H1z" fill="#fff" stroke="#222" stroke-width="1.100"/></svg>
<svg class="abs" style="left:44px;top:324px" width="16" height="16" viewBox="0 0 16 16"><path d="M5 2v10l2.500-2.300 2 4 1.600-.8-2-4H12.500z" fill="#fff" stroke="#000" stroke-width="1"/></svg>
<div id="ptabs" class="abs"></div>
<div class="abs" style="left:24px;top:729px;width:80px;height:19.5px;background:linear-gradient(180deg,#fdd9a8,#fbbf78);border:1px solid #6080c0;border-top:none;border-radius:0 0 3px 3px"></div>
<div class="abs" style="left:104.5px;top:729px;width:72px;height:19.5px;background:linear-gradient(180deg,#e6effd,#c2d6f8);border:1px solid #6080c0;border-top:none;border-radius:0 0 3px 3px"></div>
<svg class="abs" style="left:29px;top:731px" width="16" height="16" viewBox="0 0 16 16"><rect x="3.5" y="2.5" width="10" height="12" fill="#fff" stroke="#333"/><path d="M1 4h5M3.5 1.5v5M6 6.5h6M6 9.5h6M6 12.5h6" stroke="#333" fill="none"/></svg>
<svg class="abs" style="left:109px;top:731px" width="16" height="16" viewBox="0 0 16 16"><rect x="2.5" y="2.5" width="12" height="12" fill="#e8eefc" stroke="#7088c0"/><rect x="2.5" y="2.5" width="12" height="3" fill="#a8c0f0"/><path d="M8 7l5 5-5 3-4-4z" fill="#d03818" stroke="#802010" stroke-width=".6"/></svg>
<div class="phead" style="top:755px;height:24.5px"><div class="grip" style="left:5px;top:4px;height:14px"></div><svg class="abs" style="left:262px;top:4px" width="34" height="15" viewBox="0 0 34 15"><path d="M5.5 2v6M9.5 2v6M5 2.5h5M3 8.5h9M7.5 9v5" stroke="#000" stroke-width="1.3" fill="none"/><path d="M20 3l8 8M28 3l-8 8" stroke="#000" stroke-width="1.5"/></svg></div>
<div id="ent" class="abs"></div>
<div id="split" class="abs"></div>
<div id="tabrow" class="abs"></div>
<svg class="abs" style="left:326px;top:76px" width="110" height="20" viewBox="0 0 110 20"><defs><linearGradient id="tg" x1="0" y1="0" x2="0" y2="1"><stop offset="0" stop-color="#fbfdff"/><stop offset=".6" stop-color="#dbe7fb"/><stop offset="1" stop-color="#9dbbee"/></linearGradient></defs><path d="M6 19L21 3Q23 1.5 26 1.5H96Q99.5 1.5 99.5 5V19Z" fill="url(#tg)" stroke="#5c82cc" stroke-width="1"/></svg>
<svg class="abs" style="left:1880px;top:78px" width="40" height="14" viewBox="0 0 40 14"><path d="M9.500 4v5l-3-2.500zM19.500 4v5l3-2.500z" fill="none" stroke="#000" stroke-width="1"/><path d="M30 3l6 6M36 3l-6 6" stroke="#222" stroke-width="1.2"/></svg>
<div id="view" class="abs"><i></i></div>
<div id="status" class="abs">
<div class="abs" style="left:1598px;top:2px;width:1px;height:16px;background:#a0a0a0"></div>
</div>
<svg class="abs" style="left:0;top:0;pointer-events:none" width="1920" height="1040" viewBox="0 0 1920 1040" font-family="Liberation Sans, sans-serif"><text x="1190" y="65" textLength="13.5" lengthAdjust="spacingAndGlyphs" font-size="12" fill="#000">XY</text><text x="1203.8" y="65" textLength="11.2" lengthAdjust="spacingAndGlyphs" font-size="13" fill="#000">上</text><text x="1241" y="65" textLength="13.5" lengthAdjust="spacingAndGlyphs" font-size="12" fill="#000">YZ</text><text x="1254.8" y="65" textLength="11.2" lengthAdjust="spacingAndGlyphs" font-size="13" fill="#000">右</text><text x="1291.7" y="65" textLength="13.5" lengthAdjust="spacingAndGlyphs" font-size="12" fill="#000">ZX</text><text x="1305.5" y="65" textLength="11.5" lengthAdjust="spacingAndGlyphs" font-size="13" fill="#000">前</text><text x="1343" y="65" textLength="13.5" lengthAdjust="spacingAndGlyphs" font-size="12" fill="#000">XY</text><text x="1356.8" y="65" textLength="11.2" lengthAdjust="spacingAndGlyphs" font-size="13" fill="#000">下</text><text x="1394" y="65" textLength="13.5" lengthAdjust="spacingAndGlyphs" font-size="12" fill="#000">YZ</text><text x="1407.8" y="65" textLength="11.2" lengthAdjust="spacingAndGlyphs" font-size="13" fill="#000">左</text><text x="1445" y="65" textLength="13.5" lengthAdjust="spacingAndGlyphs" font-size="12" fill="#000">ZX</text><text x="1458.8" y="65" textLength="11.9" lengthAdjust="spacingAndGlyphs" font-size="13" fill="#000">後</text><text x="1496.7" y="65" textLength="21.3" lengthAdjust="spacingAndGlyphs" font-size="13" fill="#000">等角</text><text x="1545.7" y="65" textLength="33.3" lengthAdjust="spacingAndGlyphs" font-size="13" fill="#000">二等角</text><text x="1606" y="65" textLength="34.7" lengthAdjust="spacingAndGlyphs" font-size="13" fill="#000">不等角</text><text x="1675" y="65" textLength="63" lengthAdjust="spacingAndGlyphs" font-size="13" fill="#000">新しいメニュー</text><text x="66" y="137.5" textLength="35.7" lengthAdjust="spacingAndGlyphs" font-size="13" fill="#000">座標系</text><text x="66" y="155.5" textLength="44.4" lengthAdjust="spacingAndGlyphs" font-size="13" fill="#000">ジオメトリ</text><text x="66" y="173.5" textLength="36.6" lengthAdjust="spacingAndGlyphs" font-size="13" fill="#000">コネクト</text><text x="66" y="191.5" textLength="56" lengthAdjust="spacingAndGlyphs" font-size="13" fill="#000">空力 モデル</text><text x="66" y="209.5" textLength="28.7" lengthAdjust="spacingAndGlyphs" font-size="13" fill="#000">モデル</text><text x="66" y="227.5" textLength="23.6" lengthAdjust="spacingAndGlyphs" font-size="13" fill="#000">解析</text><text x="66" y="245.5" textLength="47.6" lengthAdjust="spacingAndGlyphs" font-size="13" fill="#000">解析結果</text><text x="66" y="263.5" textLength="24.4" lengthAdjust="spacingAndGlyphs" font-size="13" fill="#000">ビュー</text><text x="66" y="281.5" textLength="37" lengthAdjust="spacingAndGlyphs" font-size="13" fill="#000">グループ</text><text x="66" y="299.5" textLength="27.7" lengthAdjust="spacingAndGlyphs" font-size="13" fill="#000">レイヤ</text><text x="66" y="335.5" textLength="50.3" lengthAdjust="spacingAndGlyphs" font-size="13" fill="#000">選択リスト</text><text x="23" y="16" textLength="267" lengthAdjust="spacingAndGlyphs" font-size="12" fill="#000">Femap with NX Nastran - [Model1] - [Default View]</text><text x="19" y="40.6" textLength="33.9" lengthAdjust="spacingAndGlyphs" font-size="13" fill="#000">ファイル</text><text x="52.9" y="40.6" textLength="13.1" lengthAdjust="spacingAndGlyphs" font-size="12" fill="#000">(<tspan text-decoration="underline">F</tspan>)</text><text x="85" y="40.6" textLength="26.5" lengthAdjust="spacingAndGlyphs" font-size="13" fill="#000">ツール</text><text x="111.5" y="40.6" textLength="13.5" lengthAdjust="spacingAndGlyphs" font-size="12" fill="#000">(<tspan text-decoration="underline">T</tspan>)</text><text x="144" y="40.6" textLength="42.7" lengthAdjust="spacingAndGlyphs" font-size="13" fill="#000">ジオメトリ</text><text x="186.7" y="40.6" textLength="13.3" lengthAdjust="spacingAndGlyphs" font-size="12" fill="#000">(<tspan text-decoration="underline">E</tspan>)</text><text x="219" y="40.6" textLength="34.3" lengthAdjust="spacingAndGlyphs" font-size="13" fill="#000">コネクト</text><text x="253.3" y="40.6" textLength="14.7" lengthAdjust="spacingAndGlyphs" font-size="12" fill="#000">(<tspan text-decoration="underline">C</tspan>)</text><text x="287" y="40.6" textLength="28.0" lengthAdjust="spacingAndGlyphs" font-size="13" fill="#000">モデル</text><text x="315.0" y="40.6" textLength="18.0" lengthAdjust="spacingAndGlyphs" font-size="12" fill="#000">(<tspan text-decoration="underline">M</tspan>)</text><text x="352" y="40.6" textLength="33.4" lengthAdjust="spacingAndGlyphs" font-size="13" fill="#000">メッシュ</text><text x="385.4" y="40.6" textLength="13.6" lengthAdjust="spacingAndGlyphs" font-size="12" fill="#000">(<tspan text-decoration="underline">S</tspan>)</text><text x="418" y="40.6" textLength="23.7" lengthAdjust="spacingAndGlyphs" font-size="13" fill="#000">修正</text><text x="441.7" y="40.6" textLength="16.3" lengthAdjust="spacingAndGlyphs" font-size="12" fill="#000">(<tspan text-decoration="underline">O</tspan>)</text><text x="476" y="40.6" textLength="26.1" lengthAdjust="spacingAndGlyphs" font-size="13" fill="#000">リスト</text><text x="502.1" y="40.6" textLength="12.9" lengthAdjust="spacingAndGlyphs" font-size="12" fill="#000">(<tspan text-decoration="underline">L</tspan>)</text><text x="534" y="40.6" textLength="23.3" lengthAdjust="spacingAndGlyphs" font-size="13" fill="#000">削除</text><text x="557.3" y="40.6" textLength="15.7" lengthAdjust="spacingAndGlyphs" font-size="12" fill="#000">(<tspan text-decoration="underline">D</tspan>)</text><text x="592" y="40.6" textLength="35.5" lengthAdjust="spacingAndGlyphs" font-size="13" fill="#000">グループ</text><text x="627.5" y="40.6" textLength="15.5" lengthAdjust="spacingAndGlyphs" font-size="12" fill="#000">(<tspan text-decoration="underline">G</tspan>)</text><text x="661" y="40.6" textLength="24.3" lengthAdjust="spacingAndGlyphs" font-size="13" fill="#000">ビュー</text><text x="685.3" y="40.6" textLength="14.7" lengthAdjust="spacingAndGlyphs" font-size="12" fill="#000">(<tspan text-decoration="underline">V</tspan>)</text><text x="718" y="40.6" textLength="42.6" lengthAdjust="spacingAndGlyphs" font-size="13" fill="#000">ウィンドウ</text><text x="760.6" y="40.6" textLength="18.4" lengthAdjust="spacingAndGlyphs" font-size="12" fill="#000">(<tspan text-decoration="underline">W</tspan>)</text><text x="798" y="40.6" textLength="29.2" lengthAdjust="spacingAndGlyphs" font-size="13" fill="#000">ヘルプ</text><text x="827.2" y="40.6" textLength="15.8" lengthAdjust="spacingAndGlyphs" font-size="12" fill="#000">(<tspan text-decoration="underline">H</tspan>)</text><text x="0" y="0" textLength="83" lengthAdjust="spacingAndGlyphs" font-size="13" fill="#000" transform="translate(5.500,100) rotate(90)">プログラム ファイル</text><text x="36" y="91.5" textLength="53" lengthAdjust="spacingAndGlyphs" font-size="13" font-weight="bold" fill="#000">モデル情報</text><text x="36" y="772" textLength="77" lengthAdjust="spacingAndGlyphs" font-size="13" font-weight="bold" fill="#000">エンティティ 情報</text><text x="48" y="743.5" textLength="52" lengthAdjust="spacingAndGlyphs" font-size="13" fill="#000">モデル情報</text><text x="128" y="743.5" textLength="44" lengthAdjust="spacingAndGlyphs" font-size="13" fill="#000">メッシング</text><text x="351" y="90.7" textLength="68" lengthAdjust="spacingAndGlyphs" font-size="12" fill="#000" stroke="#000" stroke-width=".25">Default View</text><text x="3" y="1034.3" textLength="183" lengthAdjust="spacingAndGlyphs" font-size="13" fill="#000">レディ - ノード: 58905、エレメント: 32150</text><text x="1609" y="1034.5" textLength="56" lengthAdjust="spacingAndGlyphs" font-size="13" fill="#000">プロパティ: 0</text><text x="1681.6" y="1034.5" textLength="35.4" lengthAdjust="spacingAndGlyphs" font-size="13" fill="#000">荷重: 0</text><text x="1733.6" y="1034.5" textLength="35.9" lengthAdjust="spacingAndGlyphs" font-size="13" fill="#000">拘束: 0</text><text x="1785.5" y="1034.5" textLength="47.9" lengthAdjust="spacingAndGlyphs" font-size="13" fill="#000">グループ: 0</text><text x="1849.4" y="1034.5" textLength="63.0" lengthAdjust="spacingAndGlyphs" font-size="13" fill="#000">アウトプット: 0</text></svg>
<svg width="1920" height="1040" viewBox="0 0 1920 1040" style="position:absolute;left:0;top:0">
<g transform="matrix(-241.1 -555.5 0 1 891.3 712.5)" shape-rendering="crispEdges">
<rect x="0" y="-2" width="0.188" height="278" fill="#1e5a00"/>
<rect x="0.188" y="-2" width="0.059" height="167.5" fill="#783c78"/>
<rect x="0.188" y="165.5" width="0.059" height="110.5" fill="#3c3c1e"/>
<rect x="0.247" y="-2" width="0.1108" height="278" fill="#1e003c"/>
<rect x="0.3578" y="-2" width="0.0122" height="278" fill="#5a1e3c"/>
<rect x="0.37" y="-2" width="0.013" height="278" fill="#005a3c"/>
<rect x="0.383" y="-2" width="0.46" height="167.5" fill="#207474"/>
<rect x="0.383" y="165.5" width="0.46" height="110.5" fill="#1e3c5a"/>
<rect x="0.6875" y="-2" width="0.1025" height="278" fill="#780058"/>
<rect x="0.843" y="-2" width="0.157" height="278" fill="#3c783c"/>
</g>
<g transform="matrix(-241.1 -555.5 0 1 891.3 712.5)"><path d="M0.0583 0V276M0.1034 0V276M0.141 0V276M0.1654 0V276M0.188 0V276M0.2027 0V276M0.2175 0V276M0.2323 0V276M0.247 0V276M0.2679 0V276M0.2858 0V276M0.3013 0V276M0.3146 0V276M0.326 0V276M0.3358 0V276M0.3443 0V276M0.3516 0V276M0.3578 0V276M0.3639 0V276M0.37 0V276M0.3765 0V276M0.383 0V276M0.3907 0V276M0.3988 0V276M0.4073 0V276M0.4161 0V276M0.4253 0V276M0.435 0V276M0.4451 0V276M0.4557 0V276M0.4668 0V276M0.4784 0V276M0.4905 0V276M0.5031 0V276M0.5164 0V276M0.5302 0V276M0.5447 0V276M0.5599 0V276M0.5758 0V276M0.5924 0V276M0.6097 0V276M0.6279 0V276M0.6469 0V276M0.6667 0V276M0.6875 0V276M0.7131 0V276M0.7388 0V276M0.7644 0V276M0.79 0V276M0.8077 0V276M0.8253 0V276M0.843 0V276M0.8953 0V276M0.9477 0V276M0 92H1M0 128.5H1M0 150H1M0 158H1M0 165.5H1M0 173H1M0 181H1M0 207H1M0 239H1" stroke="#383c3c" stroke-opacity=".27" stroke-width=".7" fill="none" vector-effect="non-scaling-stroke" shape-rendering="auto"/></g>
<g transform="matrix(786.8 -169.1 0 1 891.3 712.5)" shape-rendering="crispEdges">
<rect x="0" y="-2" width="0.188" height="278" fill="#3cb400"/>
<rect x="0.188" y="-2" width="0.059" height="167.5" fill="#e878e8"/>
<rect x="0.188" y="165.5" width="0.059" height="110.5" fill="#78783c"/>
<rect x="0.247" y="-2" width="0.1108" height="278" fill="#3a0074"/>
<rect x="0.3578" y="-2" width="0.0122" height="278" fill="#b03c74"/>
<rect x="0.37" y="-2" width="0.013" height="278" fill="#00b078"/>
<rect x="0.383" y="-2" width="0.46" height="167.5" fill="#40e8e8"/>
<rect x="0.383" y="165.5" width="0.46" height="110.5" fill="#3c78b4"/>
<rect x="0.6875" y="-2" width="0.1025" height="278" fill="#f000b0"/>
<rect x="0.843" y="-2" width="0.157" height="278" fill="#7cee7c"/>
</g>
<g transform="matrix(786.8 -169.1 0 1 891.3 712.5)"><path d="M0.0583 0V276M0.1034 0V276M0.141 0V276M0.1654 0V276M0.188 0V276M0.2027 0V276M0.2175 0V276M0.2323 0V276M0.247 0V276M0.2679 0V276M0.2858 0V276M0.3013 0V276M0.3146 0V276M0.326 0V276M0.3358 0V276M0.3443 0V276M0.3516 0V276M0.3578 0V276M0.3639 0V276M0.37 0V276M0.3765 0V276M0.383 0V276M0.3907 0V276M0.3988 0V276M0.4073 0V276M0.4161 0V276M0.4253 0V276M0.435 0V276M0.4451 0V276M0.4557 0V276M0.4668 0V276M0.4784 0V276M0.4905 0V276M0.5031 0V276M0.5164 0V276M0.5302 0V276M0.5447 0V276M0.5599 0V276M0.5758 0V276M0.5924 0V276M0.6097 0V276M0.6279 0V276M0.6469 0V276M0.6667 0V276M0.6875 0V276M0.7131 0V276M0.7388 0V276M0.7644 0V276M0.79 0V276M0.8077 0V276M0.8253 0V276M0.843 0V276M0.8953 0V276M0.9477 0V276M0 92H1M0 128.5H1M0 150H1M0 158H1M0 165.5H1M0 173H1M0 181H1M0 207H1M0 239H1" stroke="#383c3c" stroke-opacity=".3" stroke-width=".7" fill="none" vector-effect="non-scaling-stroke" shape-rendering="auto"/></g>
<g transform="matrix(-241.1 -555.5 786.8 -169.1 891.3 712.5)" shape-rendering="crispEdges">
<clipPath id="q1"><rect x="0" y="0" width="1.2" height="1.2"/></clipPath>
<g shape-rendering="crispEdges">
<path d="M0 0L1 0A1 1 0 0 1 0 1Z" fill="#7cf47c"/>
<path d="M0 0L0.843 0A0.843 0.843 0 0 1 0 0.843Z" fill="#40f4f4"/>
</g>
<path d="M0.843 0A0.843 0.843 0 0 1 0 0.843M0.8953 0A0.8953 0.8953 0 0 1 0 0.8953M0.9477 0A0.9477 0.9477 0 0 1 0 0.9477M1 0A1 1 0 0 1 0 1M0.843 0L1 0M0.8424 0.0315L0.9993 0.0374M0.8406 0.063L0.9972 0.0747M0.8377 0.0944L0.9937 0.112M0.8336 0.1256L0.9888 0.149M0.8283 0.1567L0.9826 0.1859M0.8219 0.1876L0.9749 0.2225M0.8143 0.2182L0.9659 0.2588M0.8055 0.2485L0.9556 0.2948M0.7957 0.2784L0.9439 0.3303M0.7847 0.308L0.9309 0.3653M0.7727 0.3371L0.9166 0.3999M0.7595 0.3658L0.901 0.4339M0.7453 0.3939L0.8841 0.4673M0.7301 0.4215L0.866 0.5M0.7138 0.4485L0.8467 0.532M0.6965 0.4749L0.8262 0.5633M0.6783 0.5006L0.8046 0.5938M0.6591 0.5256L0.7818 0.6235M0.639 0.5499L0.758 0.6523M0.618 0.5734L0.7331 0.6802M0.5961 0.5961L0.7071 0.7071M0.5734 0.618L0.6802 0.7331M0.5499 0.639L0.6523 0.758M0.5256 0.6591L0.6235 0.7818M0.5006 0.6783L0.5938 0.8046M0.4749 0.6965L0.5633 0.8262M0.4485 0.7138L0.532 0.8467M0.4215 0.7301L0.5 0.866M0.3939 0.7453L0.4673 0.8841M0.3658 0.7595L0.4339 0.901M0.3371 0.7727L0.3999 0.9166M0.308 0.7847L0.3653 0.9309M0.2784 0.7957L0.3303 0.9439M0.2485 0.8055L0.2948 0.9556M0.2182 0.8143L0.2588 0.9659M0.1876 0.8219L0.2225 0.9749M0.1567 0.8283L0.1859 0.9826M0.1256 0.8336L0.149 0.9888M0.0944 0.8377L0.112 0.9937M0.063 0.8406L0.0747 0.9972M0.0315 0.8424L0.0374 0.9993M0 0.843L0 1M0.625 0A0.625 0.625 0 0 1 0 0.625M0.6686 0A0.6686 0.6686 0 0 1 0 0.6686M0.7122 0A0.7122 0.7122 0 0 1 0 0.7122M0.7558 0A0.7558 0.7558 0 0 1 0 0.7558M0.7994 0A0.7994 0.7994 0 0 1 0 0.7994M0.843 0A0.843 0.843 0 0 1 0 0.843M0.625 0L0.843 0M0.6246 0.0234L0.8424 0.0315M0.6233 0.0467L0.8406 0.063M0.6211 0.07L0.8377 0.0944M0.618 0.0932L0.8336 0.1256M0.6141 0.1162L0.8283 0.1567M0.6093 0.1391L0.8219 0.1876M0.6037 0.1618L0.8143 0.2182M0.5972 0.1842L0.8055 0.2485M0.5899 0.2064L0.7957 0.2784M0.5818 0.2283L0.7847 0.308M0.5729 0.2499L0.7727 0.3371M0.5631 0.2712L0.7595 0.3658M0.5526 0.292L0.7453 0.3939M0.5413 0.3125L0.7301 0.4215M0.5292 0.3325L0.7138 0.4485M0.5164 0.3521L0.6965 0.4749M0.5029 0.3711L0.6783 0.5006M0.4886 0.3897L0.6591 0.5256M0.4737 0.4077L0.639 0.5499M0.4582 0.4251L0.618 0.5734M0.4419 0.4419L0.5961 0.5961M0.4251 0.4582L0.5734 0.618M0.4077 0.4737L0.5499 0.639M0.3897 0.4886L0.5256 0.6591M0.3711 0.5029L0.5006 0.6783M0.3521 0.5164L0.4749 0.6965M0.3325 0.5292L0.4485 0.7138M0.3125 0.5413L0.4215 0.7301M0.292 0.5526L0.3939 0.7453M0.2712 0.5631L0.3658 0.7595M0.2499 0.5729L0.3371 0.7727M0.2283 0.5818L0.308 0.7847M0.2064 0.5899L0.2784 0.7957M0.1842 0.5972L0.2485 0.8055M0.1618 0.6037L0.2182 0.8143M0.1391 0.6093L0.1876 0.8219M0.1162 0.6141L0.1567 0.8283M0.0932 0.618L0.1256 0.8336M0.07 0.6211L0.0944 0.8377M0.0467 0.6233L0.063 0.8406M0.0234 0.6246L0.0315 0.8424M0 0.625L0 0.843M0.383 0A0.383 0.383 0 0 1 0 0.383M0.3927 0A0.3927 0.3927 0 0 1 0 0.3927M0.4025 0A0.4025 0.4025 0 0 1 0 0.4025M0.4123 0A0.4123 0.4123 0 0 1 0 0.4123M0.422 0A0.422 0.422 0 0 1 0 0.422M0.4318 0A0.4318 0.4318 0 0 1 0 0.4318M0.4415 0A0.4415 0.4415 0 0 1 0 0.4415M0.4512 0A0.4512 0.4512 0 0 1 0 0.4512M0.461 0A0.461 0.461 0 0 1 0 0.461M0.4708 0A0.4708 0.4708 0 0 1 0 0.4708M0.4805 0A0.4805 0.4805 0 0 1 0 0.4805M0.4903 0A0.4903 0.4903 0 0 1 0 0.4903M0.5 0A0.5 0.5 0 0 1 0 0.5M0.383 0L0.5 0M0.3829 0.0067L0.4999 0.0087M0.3828 0.0134L0.4997 0.0174M0.3825 0.02L0.4993 0.0262M0.3821 0.0267L0.4988 0.0349M0.3815 0.0334L0.4981 0.0436M0.3809 0.04L0.4973 0.0523M0.3801 0.0467L0.4963 0.0609M0.3793 0.0533L0.4951 0.0696M0.3783 0.0599L0.4938 0.0782M0.3772 0.0665L0.4924 0.0868M0.376 0.0731L0.4908 0.0954M0.3746 0.0796L0.4891 0.104M0.3732 0.0862L0.4872 0.1125M0.3716 0.0927L0.4851 0.121M0.3699 0.0991L0.483 0.1294M0.3682 0.1056L0.4806 0.1378M0.3663 0.112L0.4782 0.1462M0.3643 0.1184L0.4755 0.1545M0.3621 0.1247L0.4728 0.1628M0.3599 0.131L0.4698 0.171M0.3576 0.1373L0.4668 0.1792M0.3551 0.1435L0.4636 0.1873M0.3526 0.1497L0.4603 0.1954M0.3499 0.1558L0.4568 0.2034M0.3471 0.1619L0.4532 0.2113M0.3442 0.1679L0.4494 0.2192M0.3413 0.1739L0.4455 0.227M0.3382 0.1798L0.4415 0.2347M0.335 0.1857L0.4373 0.2424M0.3317 0.1915L0.433 0.25M0.3283 0.1973L0.4286 0.2575M0.3248 0.203L0.424 0.265M0.3212 0.2086L0.4193 0.2723M0.3175 0.2142L0.4145 0.2796M0.3137 0.2197L0.4096 0.2868M0.3099 0.2251L0.4045 0.2939M0.3059 0.2305L0.3993 0.3009M0.3018 0.2358L0.394 0.3078M0.2976 0.241L0.3886 0.3147M0.2934 0.2462L0.383 0.3214M0.2891 0.2513L0.3774 0.328M0.2846 0.2563L0.3716 0.3346M0.2801 0.2612L0.3657 0.341M0.2755 0.2661L0.3597 0.3473M0.2708 0.2708L0.3536 0.3536M0.2661 0.2755L0.3473 0.3597M0.2612 0.2801L0.341 0.3657M0.2563 0.2846L0.3346 0.3716M0.2513 0.2891L0.328 0.3774M0.2462 0.2934L0.3214 0.383M0.241 0.2976L0.3147 0.3886M0.2358 0.3018L0.3078 0.394M0.2305 0.3059L0.3009 0.3993M0.2251 0.3099L0.2939 0.4045M0.2197 0.3137L0.2868 0.4096M0.2142 0.3175L0.2796 0.4145M0.2086 0.3212L0.2723 0.4193M0.203 0.3248L0.265 0.424M0.1973 0.3283L0.2575 0.4286M0.1915 0.3317L0.25 0.433M0.1857 0.335L0.2424 0.4373M0.1798 0.3382L0.2347 0.4415M0.1739 0.3413L0.227 0.4455M0.1679 0.3442L0.2192 0.4494M0.1619 0.3471L0.2113 0.4532M0.1558 0.3499L0.2034 0.4568M0.1497 0.3526L0.1954 0.4603M0.1435 0.3551L0.1873 0.4636M0.1373 0.3576L0.1792 0.4668M0.131 0.3599L0.171 0.4698M0.1247 0.3621L0.1628 0.4728M0.1184 0.3643L0.1545 0.4755M0.112 0.3663L0.1462 0.4782M0.1056 0.3682L0.1378 0.4806M0.0991 0.3699L0.1294 0.483M0.0927 0.3716L0.121 0.4851M0.0862 0.3732L0.1125 0.4872M0.0796 0.3746L0.104 0.4891M0.0731 0.376L0.0954 0.4908M0.0665 0.3772L0.0868 0.4924M0.0599 0.3783L0.0782 0.4938M0.0533 0.3793L0.0696 0.4951M0.0467 0.3801L0.0609 0.4963M0.04 0.3809L0.0523 0.4973M0.0334 0.3815L0.0436 0.4981M0.0267 0.3821L0.0349 0.4988M0.02 0.3825L0.0262 0.4993M0.0134 0.3828L0.0174 0.4997M0.0067 0.3829L0.0087 0.4999M0 0.383L0 0.5M0.5 0A0.5 0.5 0 0 1 0 0.5M0.5139 0A0.5139 0.5139 0 0 1 0 0.5139M0.5278 0A0.5278 0.5278 0 0 1 0 0.5278M0.5417 0A0.5417 0.5417 0 0 1 0 0.5417M0.5556 0A0.5556 0.5556 0 0 1 0 0.5556M0.5694 0A0.5694 0.5694 0 0 1 0 0.5694M0.5833 0A0.5833 0.5833 0 0 1 0 0.5833M0.5972 0A0.5972 0.5972 0 0 1 0 0.5972M0.6111 0A0.6111 0.6111 0 0 1 0 0.6111M0.625 0A0.625 0.625 0 0 1 0 0.625M0.5 0L0.625 0M0.4999 0.0109L0.6249 0.0136M0.4995 0.0218L0.6244 0.0273M0.4989 0.0327L0.6237 0.0409M0.4981 0.0436L0.6226 0.0545M0.497 0.0544L0.6213 0.068M0.4957 0.0653L0.6197 0.0816M0.4942 0.0761L0.6177 0.0951M0.4924 0.0868L0.6155 0.1085M0.4904 0.0975L0.613 0.1219M0.4881 0.1082L0.6102 0.1353M0.4857 0.1188L0.6071 0.1486M0.483 0.1294L0.6037 0.1618M0.48 0.1399L0.6 0.1749M0.4769 0.1504L0.5961 0.1879M0.4735 0.1607L0.5918 0.2009M0.4698 0.171L0.5873 0.2138M0.466 0.1812L0.5825 0.2265M0.4619 0.1913L0.5774 0.2392M0.4577 0.2014L0.5721 0.2517M0.4532 0.2113L0.5664 0.2641M0.4484 0.2211L0.5605 0.2764M0.4435 0.2309L0.5544 0.2886M0.4384 0.2405L0.548 0.3006M0.433 0.25L0.5413 0.3125M0.4275 0.2594L0.5343 0.3242M0.4217 0.2686L0.5271 0.3358M0.4157 0.2778L0.5197 0.3472M0.4096 0.2868L0.512 0.3585M0.4032 0.2957L0.504 0.3696M0.3967 0.3044L0.4958 0.3805M0.3899 0.313L0.4874 0.3912M0.383 0.3214L0.4788 0.4017M0.3759 0.3297L0.4699 0.4121M0.3686 0.3378L0.4608 0.4222M0.3612 0.3458L0.4515 0.4322M0.3536 0.3536L0.4419 0.4419M0.3458 0.3612L0.4322 0.4515M0.3378 0.3686L0.4222 0.4608M0.3297 0.3759L0.4121 0.4699M0.3214 0.383L0.4017 0.4788M0.313 0.3899L0.3912 0.4874M0.3044 0.3967L0.3805 0.4958M0.2957 0.4032L0.3696 0.504M0.2868 0.4096L0.3585 0.512M0.2778 0.4157L0.3472 0.5197M0.2686 0.4217L0.3358 0.5271M0.2594 0.4275L0.3242 0.5343M0.25 0.433L0.3125 0.5413M0.2405 0.4384L0.3006 0.548M0.2309 0.4435L0.2886 0.5544M0.2211 0.4484L0.2764 0.5605M0.2113 0.4532L0.2641 0.5664M0.2014 0.4577L0.2517 0.5721M0.1913 0.4619L0.2392 0.5774M0.1812 0.466L0.2265 0.5825M0.171 0.4698L0.2138 0.5873M0.1607 0.4735L0.2009 0.5918M0.1504 0.4769L0.1879 0.5961M0.1399 0.48L0.1749 0.6M0.1294 0.483L0.1618 0.6037M0.1188 0.4857L0.1486 0.6071M0.1082 0.4881L0.1353 0.6102M0.0975 0.4904L0.1219 0.613M0.0868 0.4924L0.1085 0.6155M0.0761 0.4942L0.0951 0.6177M0.0653 0.4957L0.0816 0.6197M0.0544 0.497L0.068 0.6213M0.0436 0.4981L0.0545 0.6226M0.0327 0.4989L0.0409 0.6237M0.0218 0.4995L0.0273 0.6244M0.0109 0.4999L0.0136 0.6249M0 0.5L0 0.625" stroke="#383c3c" stroke-opacity=".4" stroke-width=".8" fill="none" vector-effect="non-scaling-stroke" shape-rendering="auto"/>
<g clip-path="url(#q1)"><circle cx="0.7386" cy="0" r="0.0511" fill="#f400b4"/>
<path d="M0.7386 0L0.7897 0M0.7386 0L0.7858 0.0196M0.7386 0L0.7747 0.0361M0.7386 0L0.7582 0.0472M0.7386 0L0.7386 0.0511M0.7386 0L0.719 0.0472M0.7386 0L0.7025 0.0361M0.7386 0L0.6914 0.0196M0.7386 0L0.6875 0M0.7386 0L0.6914 -0.0196M0.7386 0L0.7025 -0.0361M0.7386 0L0.719 -0.0472M0.7386 0L0.7386 -0.0511M0.7386 0L0.7582 -0.0472M0.7386 0L0.7747 -0.0361M0.7386 0L0.7858 -0.0196" stroke="#383c3c" stroke-opacity=".4" stroke-width=".8" fill="none" vector-effect="non-scaling-stroke" shape-rendering="auto"/><circle cx="0.7386" cy="0" r="0.0255" stroke="#383c3c" stroke-opacity=".4" stroke-width=".8" fill="none" vector-effect="non-scaling-stroke" shape-rendering="auto"/><circle cx="0.7386" cy="0" r="0.0511" stroke="#383c3c" stroke-opacity=".4" stroke-width=".8" fill="none" vector-effect="non-scaling-stroke" shape-rendering="auto"/></g>
<g clip-path="url(#q1)"><circle cx="0" cy="0.7386" r="0.0511" fill="#f400b4"/>
<path d="M0 0.7386L0.0511 0.7386M0 0.7386L0.0472 0.7582M0 0.7386L0.0361 0.7747M0 0.7386L0.0196 0.7858M0 0.7386L0 0.7897M0 0.7386L-0.0196 0.7858M0 0.7386L-0.0361 0.7747M0 0.7386L-0.0472 0.7582M0 0.7386L-0.0511 0.7386M0 0.7386L-0.0472 0.719M0 0.7386L-0.0361 0.7025M0 0.7386L-0.0196 0.6914M0 0.7386L0 0.6875M0 0.7386L0.0196 0.6914M0 0.7386L0.0361 0.7025M0 0.7386L0.0472 0.719" stroke="#383c3c" stroke-opacity=".4" stroke-width=".8" fill="none" vector-effect="non-scaling-stroke" shape-rendering="auto"/><circle cx="0" cy="0.7386" r="0.0255" stroke="#383c3c" stroke-opacity=".4" stroke-width=".8" fill="none" vector-effect="non-scaling-stroke" shape-rendering="auto"/><circle cx="0" cy="0.7386" r="0.0511" stroke="#383c3c" stroke-opacity=".4" stroke-width=".8" fill="none" vector-effect="non-scaling-stroke" shape-rendering="auto"/></g>
<g transform="rotate(15)">
<path d="M.398 -.0237L.4115 -.0537L.585 -.0976L.598 -.0972L.6056 -.0938L.6114 -.0893L.6171 -.0818L.62 -.0732A.6243 .6243 0 0 1 .62 .0732L.6171 .0818L.6114 .0893L.6056 .0938L.598 .0972L.585 .0976L.4115 .0537L.398 .0237Z" fill="#7a3cf4"/>
<rect x=".3825" y="-.0237" width=".0160" height=".0474" fill="#f400b4"/>
<clipPath id="sc15"><path d="M.398 -.0237L.4115 -.0537L.585 -.0976L.598 -.0972L.6056 -.0938L.6114 -.0893L.6171 -.0818L.62 -.0732A.6243 .6243 0 0 1 .62 .0732L.6171 .0818L.6114 .0893L.6056 .0938L.598 .0972L.585 .0976L.4115 .0537L.398 .0237ZM.3825 -.0237H.3985V.0237H.3825Z"/></clipPath>
<path clip-path="url(#sc15)" d="M.398 -0.0207L.4115 -0.047L.625 -0.0949M.398 -0.0178L.4115 -0.0403L.625 -0.0814M.398 -0.0148L.4115 -0.0336L.625 -0.0678M.398 -0.0118L.4115 -0.0268L.625 -0.0542M.398 -0.0089L.4115 -0.0201L.625 -0.0407M.398 -0.0059L.4115 -0.0134L.625 -0.0271M.398 -0.003L.4115 -0.0067L.625 -0.0136M.398 0L.4115 0L.625 0M.398 0.003L.4115 0.0067L.625 0.0136M.398 0.0059L.4115 0.0134L.625 0.0271M.398 0.0089L.4115 0.0201L.625 0.0407M.398 0.0118L.4115 0.0268L.625 0.0542M.398 0.0148L.4115 0.0336L.625 0.0678M.398 0.0178L.4115 0.0403L.625 0.0814M.398 0.0207L.4115 0.047L.625 0.0949M0.4115 -.11V.11M0.424 -.11V.11M0.4365 -.11V.11M0.449 -.11V.11M0.4615 -.11V.11M0.474 -.11V.11M0.4865 -.11V.11M0.499 -.11V.11M0.5115 -.11V.11M0.524 -.11V.11M0.5365 -.11V.11M0.549 -.11V.11M0.5615 -.11V.11M0.574 -.11V.11M0.5865 -.11V.11M0.599 -.11V.11M0.6115 -.11V.11M.3825 -0.019H.398M.3825 -0.0142H.398M.3825 -0.0095H.398M.3825 -0.0047H.398M.3825 0H.398M.3825 0.0047H.398M.3825 0.0095H.398M.3825 0.0142H.398M.3825 0.019H.398M.39 -.0237V.0237" stroke="#383c3c" stroke-opacity=".4" stroke-width=".8" fill="none" vector-effect="non-scaling-stroke" shape-rendering="auto"/>
</g>
<g transform="rotate(45)">
<path d="M.398 -.0237L.4115 -.0537L.585 -.0976L.598 -.0972L.6056 -.0938L.6114 -.0893L.6171 -.0818L.62 -.0732A.6243 .6243 0 0 1 .62 .0732L.6171 .0818L.6114 .0893L.6056 .0938L.598 .0972L.585 .0976L.4115 .0537L.398 .0237Z" fill="#0000f0"/>
<rect x=".3825" y="-.0237" width=".0160" height=".0474" fill="#f400b4"/>
<clipPath id="sc45"><path d="M.398 -.0237L.4115 -.0537L.585 -.0976L.598 -.0972L.6056 -.0938L.6114 -.0893L.6171 -.0818L.62 -.0732A.6243 .6243 0 0 1 .62 .0732L.6171 .0818L.6114 .0893L.6056 .0938L.598 .0972L.585 .0976L.4115 .0537L.398 .0237ZM.3825 -.0237H.3985V.0237H.3825Z"/></clipPath>
<path clip-path="url(#sc45)" d="M.398 -0.0207L.4115 -0.047L.625 -0.0949M.398 -0.0178L.4115 -0.0403L.625 -0.0814M.398 -0.0148L.4115 -0.0336L.625 -0.0678M.398 -0.0118L.4115 -0.0268L.625 -0.0542M.398 -0.0089L.4115 -0.0201L.625 -0.0407M.398 -0.0059L.4115 -0.0134L.625 -0.0271M.398 -0.003L.4115 -0.0067L.625 -0.0136M.398 0L.4115 0L.625 0M.398 0.003L.4115 0.0067L.625 0.0136M.398 0.0059L.4115 0.0134L.625 0.0271M.398 0.0089L.4115 0.0201L.625 0.0407M.398 0.0118L.4115 0.0268L.625 0.0542M.398 0.0148L.4115 0.0336L.625 0.0678M.398 0.0178L.4115 0.0403L.625 0.0814M.398 0.0207L.4115 0.047L.625 0.0949M0.4115 -.11V.11M0.424 -.11V.11M0.4365 -.11V.11M0.449 -.11V.11M0.4615 -.11V.11M0.474 -.11V.11M0.4865 -.11V.11M0.499 -.11V.11M0.5115 -.11V.11M0.524 -.11V.11M0.5365 -.11V.11M0.549 -.11V.11M0.5615 -.11V.11M0.574 -.11V.11M0.5865 -.11V.11M0.599 -.11V.11M0.6115 -.11V.11M.3825 -0.019H.398M.3825 -0.0142H.398M.3825 -0.0095H.398M.3825 -0.0047H.398M.3825 0H.398M.3825 0.0047H.398M.3825 0.0095H.398M.3825 0.0142H.398M.3825 0.019H.398M.39 -.0237V.0237" stroke="#383c3c" stroke-opacity=".4" stroke-width=".8" fill="none" vector-effect="non-scaling-stroke" shape-rendering="auto"/>
</g>
<g transform="rotate(75)">
<path d="M.398 -.0237L.4115 -.0537L.585 -.0976L.598 -.0972L.6056 -.0938L.6114 -.0893L.6171 -.0818L.62 -.0732A.6243 .6243 0 0 1 .62 .0732L.6171 .0818L.6114 .0893L.6056 .0938L.598 .0972L.585 .0976L.4115 .0537L.398 .0237Z" fill="#b0b0b0"/>
<rect x=".3825" y="-.0237" width=".0160" height=".0474" fill="#f400b4"/>
<clipPath id="sc75"><path d="M.398 -.0237L.4115 -.0537L.585 -.0976L.598 -.0972L.6056 -.0938L.6114 -.0893L.6171 -.0818L.62 -.0732A.6243 .6243 0 0 1 .62 .0732L.6171 .0818L.6114 .0893L.6056 .0938L.598 .0972L.585 .0976L.4115 .0537L.398 .0237ZM.3825 -.0237H.3985V.0237H.3825Z"/></clipPath>
<path clip-path="url(#sc75)" d="M.398 -0.0207L.4115 -0.047L.625 -0.0949M.398 -0.0178L.4115 -0.0403L.625 -0.0814M.398 -0.0148L.4115 -0.0336L.625 -0.0678M.398 -0.0118L.4115 -0.0268L.625 -0.0542M.398 -0.0089L.4115 -0.0201L.625 -0.0407M.398 -0.0059L.4115 -0.0134L.625 -0.0271M.398 -0.003L.4115 -0.0067L.625 -0.0136M.398 0L.4115 0L.625 0M.398 0.003L.4115 0.0067L.625 0.0136M.398 0.0059L.4115 0.0134L.625 0.0271M.398 0.0089L.4115 0.0201L.625 0.0407M.398 0.0118L.4115 0.0268L.625 0.0542M.398 0.0148L.4115 0.0336L.625 0.0678M.398 0.0178L.4115 0.0403L.625 0.0814M.398 0.0207L.4115 0.047L.625 0.0949M0.4115 -.11V.11M0.424 -.11V.11M0.4365 -.11V.11M0.449 -.11V.11M0.4615 -.11V.11M0.474 -.11V.11M0.4865 -.11V.11M0.499 -.11V.11M0.5115 -.11V.11M0.524 -.11V.11M0.5365 -.11V.11M0.549 -.11V.11M0.5615 -.11V.11M0.574 -.11V.11M0.5865 -.11V.11M0.599 -.11V.11M0.6115 -.11V.11M.3825 -0.019H.398M.3825 -0.0142H.398M.3825 -0.0095H.398M.3825 -0.0047H.398M.3825 0H.398M.3825 0.0047H.398M.3825 0.0095H.398M.3825 0.0142H.398M.3825 0.019H.398M.39 -.0237V.0237" stroke="#383c3c" stroke-opacity=".4" stroke-width=".8" fill="none" vector-effect="non-scaling-stroke" shape-rendering="auto"/>
</g>
<path d="M0 0L0.383 0A0.383 0.383 0 0 1 0 0.383Z" fill="#00b478"/>
<path d="M0 0L0.3608 0A0.3608 0.3608 0 0 1 0 0.3608Z" fill="#3c0078"/>
<path d="M0.247 0A0.247 0.247 0 0 1 0 0.247M0.2549 0A0.2549 0.2549 0 0 1 0 0.2549M0.2628 0A0.2628 0.2628 0 0 1 0 0.2628M0.2707 0A0.2707 0.2707 0 0 1 0 0.2707M0.2787 0A0.2787 0.2787 0 0 1 0 0.2787M0.2866 0A0.2866 0.2866 0 0 1 0 0.2866M0.2945 0A0.2945 0.2945 0 0 1 0 0.2945M0.3024 0A0.3024 0.3024 0 0 1 0 0.3024M0.3103 0A0.3103 0.3103 0 0 1 0 0.3103M0.3182 0A0.3182 0.3182 0 0 1 0 0.3182M0.3261 0A0.3261 0.3261 0 0 1 0 0.3261M0.3341 0A0.3341 0.3341 0 0 1 0 0.3341M0.342 0A0.342 0.342 0 0 1 0 0.342M0.3499 0A0.3499 0.3499 0 0 1 0 0.3499M0.3578 0A0.3578 0.3578 0 0 1 0 0.3578M0.247 0L0.3578 0M0.247 0.0043L0.3577 0.0062M0.2468 0.0086L0.3576 0.0125M0.2467 0.0129L0.3573 0.0187M0.2464 0.0172L0.3569 0.025M0.2461 0.0215L0.3564 0.0312M0.2456 0.0258L0.3558 0.0374M0.2452 0.0301L0.3551 0.0436M0.2446 0.0344L0.3543 0.0498M0.244 0.0386L0.3534 0.056M0.247 0A0.247 0.247 0 0 1 0 0.247M0.2549 0A0.2549 0.2549 0 0 1 0 0.2549M0.2628 0A0.2628 0.2628 0 0 1 0 0.2628M0.2707 0A0.2707 0.2707 0 0 1 0 0.2707M0.2787 0A0.2787 0.2787 0 0 1 0 0.2787M0.2866 0A0.2866 0.2866 0 0 1 0 0.2866M0.2945 0A0.2945 0.2945 0 0 1 0 0.2945M0.3024 0A0.3024 0.3024 0 0 1 0 0.3024M0.3103 0A0.3103 0.3103 0 0 1 0 0.3103M0.3182 0A0.3182 0.3182 0 0 1 0 0.3182M0.3261 0A0.3261 0.3261 0 0 1 0 0.3261M0.3341 0A0.3341 0.3341 0 0 1 0 0.3341M0.342 0A0.342 0.342 0 0 1 0 0.342M0.3499 0A0.3499 0.3499 0 0 1 0 0.3499M0.3578 0A0.3578 0.3578 0 0 1 0 0.3578M0.0386 0.244L0.056 0.3534M0.0344 0.2446L0.0498 0.3543M0.0301 0.2452L0.0436 0.3551M0.0258 0.2456L0.0374 0.3558M0.0215 0.2461L0.0312 0.3564M0.0172 0.2464L0.025 0.3569M0.0129 0.2467L0.0187 0.3573M0.0086 0.2468L0.0125 0.3576M0.0043 0.247L0.0062 0.3577M0 0.247L0 0.3578" stroke="#383c3c" stroke-opacity=".4" stroke-width=".8" fill="none" vector-effect="non-scaling-stroke" shape-rendering="auto"/>
<path d="M.17 0L.2475 0L.2475 .0147L.316 .0147L.35605 .05455A.3602 .3602 0 0 1 .05455 .35605L.0147 .316L.0147 .2475L0 .2475L0 .17A.17 .17 0 0 0 .17 0Z" fill="#f478f4"/>
<path d="M0.37 0A0.37 0.37 0 0 1 0 0.37L0 0.3578A0.3578 0.3578 0 0 0 0.3578 0Z" fill="#b43c78"/>
<path d="M0.37 0A0.37 0.37 0 0 1 0 0.37M0.3765 0A0.3765 0.3765 0 0 1 0 0.3765M0.383 0A0.383 0.383 0 0 1 0 0.383M0.37 0L0.383 0M0.37 0.0048L0.383 0.005M0.3699 0.0097L0.3829 0.01M0.3697 0.0145L0.3827 0.015M0.3695 0.0194L0.3825 0.02M0.3692 0.0242L0.3822 0.025M0.3689 0.029L0.3818 0.03M0.3684 0.0339L0.3814 0.035M0.368 0.0387L0.3809 0.04M0.3674 0.0435L0.3803 0.045M0.3668 0.0483L0.3797 0.05M0.3662 0.0531L0.379 0.055M0.3654 0.0579L0.3783 0.0599M0.3647 0.0627L0.3775 0.0649M0.3638 0.0674L0.3766 0.0698M0.3629 0.0722L0.3756 0.0747M0.3619 0.0769L0.3746 0.0796M0.3609 0.0817L0.3736 0.0845M0.3598 0.0864L0.3724 0.0894M0.3586 0.0911L0.3712 0.0943M0.3574 0.0958L0.3699 0.0991M0.3561 0.1004L0.3686 0.104M0.3548 0.1051L0.3672 0.1088M0.3534 0.1097L0.3658 0.1136M0.3519 0.1143L0.3643 0.1184M0.3504 0.1189L0.3627 0.1231M0.3488 0.1235L0.361 0.1278M0.3471 0.1281L0.3593 0.1326M0.3454 0.1326L0.3576 0.1373M0.3437 0.1371L0.3557 0.1419M0.3418 0.1416L0.3538 0.1466M0.34 0.1461L0.3519 0.1512M0.338 0.1505L0.3499 0.1558M0.336 0.1549L0.3478 0.1603M0.334 0.1593L0.3457 0.1649M0.3318 0.1636L0.3435 0.1694M0.3297 0.168L0.3413 0.1739M0.3274 0.1723L0.339 0.1783M0.3252 0.1765L0.3366 0.1828M0.3228 0.1808L0.3342 0.1871M0.3204 0.185L0.3317 0.1915M0.318 0.1892L0.3292 0.1958M0.3155 0.1933L0.3266 0.2001M0.3129 0.1974L0.3239 0.2044M0.3103 0.2015L0.3212 0.2086M0.3076 0.2056L0.3185 0.2128M0.3049 0.2096L0.3156 0.2169M0.3022 0.2135L0.3128 0.221M0.2993 0.2175L0.3099 0.2251M0.2965 0.2214L0.3069 0.2292M0.2935 0.2252L0.3039 0.2332M0.2906 0.2291L0.3008 0.2371M0.2875 0.2328L0.2976 0.241M0.2845 0.2366L0.2945 0.2449M0.2814 0.2403L0.2912 0.2487M0.2782 0.244L0.288 0.2525M0.275 0.2476L0.2846 0.2563M0.2717 0.2512L0.2812 0.26M0.2684 0.2547L0.2778 0.2636M0.265 0.2582L0.2743 0.2673M0.2616 0.2616L0.2708 0.2708M0.2582 0.265L0.2673 0.2743M0.2547 0.2684L0.2636 0.2778M0.2512 0.2717L0.26 0.2812M0.2476 0.275L0.2563 0.2846M0.244 0.2782L0.2525 0.288M0.2403 0.2814L0.2487 0.2912M0.2366 0.2845L0.2449 0.2945M0.2328 0.2875L0.241 0.2976M0.2291 0.2906L0.2371 0.3008M0.2252 0.2935L0.2332 0.3039M0.2214 0.2965L0.2292 0.3069M0.2175 0.2993L0.2251 0.3099M0.2135 0.3022L0.221 0.3128M0.2096 0.3049L0.2169 0.3156M0.2056 0.3076L0.2128 0.3185M0.2015 0.3103L0.2086 0.3212M0.1974 0.3129L0.2044 0.3239M0.1933 0.3155L0.2001 0.3266M0.1892 0.318L0.1958 0.3292M0.185 0.3204L0.1915 0.3317M0.1808 0.3228L0.1871 0.3342M0.1765 0.3252L0.1828 0.3366M0.1723 0.3274L0.1783 0.339M0.168 0.3297L0.1739 0.3413M0.1636 0.3318L0.1694 0.3435M0.1593 0.334L0.1649 0.3457M0.1549 0.336L0.1603 0.3478M0.1505 0.338L0.1558 0.3499M0.1461 0.34L0.1512 0.3519M0.1416 0.3418L0.1466 0.3538M0.1371 0.3437L0.1419 0.3557M0.1326 0.3454L0.1373 0.3576M0.1281 0.3471L0.1326 0.3593M0.1235 0.3488L0.1278 0.361M0.1189 0.3504L0.1231 0.3627M0.1143 0.3519L0.1184 0.3643M0.1097 0.3534L0.1136 0.3658M0.1051 0.3548L0.1088 0.3672M0.1004 0.3561L0.104 0.3686M0.0958 0.3574L0.0991 0.3699M0.0911 0.3586L0.0943 0.3712M0.0864 0.3598L0.0894 0.3724M0.0817 0.3609L0.0845 0.3736M0.0769 0.3619L0.0796 0.3746M0.0722 0.3629L0.0747 0.3756M0.0674 0.3638L0.0698 0.3766M0.0627 0.3647L0.0649 0.3775M0.0579 0.3654L0.0599 0.3783M0.0531 0.3662L0.055 0.379M0.0483 0.3668L0.05 0.3797M0.0435 0.3674L0.045 0.3803M0.0387 0.368L0.04 0.3809M0.0339 0.3684L0.035 0.3814M0.029 0.3689L0.03 0.3818M0.0242 0.3692L0.025 0.3822M0.0194 0.3695L0.02 0.3825M0.0145 0.3697L0.015 0.3827M0.0097 0.3699L0.01 0.3829M0.0048 0.37L0.005 0.383M0 0.37L0 0.383M0.3578 0A0.3578 0.3578 0 0 1 0 0.3578M0.3639 0A0.3639 0.3639 0 0 1 0 0.3639M0.37 0A0.37 0.37 0 0 1 0 0.37M0.3578 0L0.37 0M0.3578 0.0047L0.37 0.0048M0.3577 0.0094L0.3699 0.0097M0.3575 0.014L0.3697 0.0145M0.3573 0.0187L0.3695 0.0194M0.357 0.0234L0.3692 0.0242M0.3567 0.0281L0.3689 0.029M0.3563 0.0327L0.3684 0.0339M0.3558 0.0374L0.368 0.0387M0.3553 0.0421L0.3674 0.0435M0.3547 0.0467L0.3668 0.0483M0.3541 0.0513L0.3662 0.0531M0.3534 0.056L0.3654 0.0579M0.3526 0.0606L0.3647 0.0627M0.3518 0.0652L0.3638 0.0674M0.3509 0.0698L0.3629 0.0722M0.35 0.0744L0.3619 0.0769M0.349 0.079L0.3609 0.0817M0.3479 0.0835L0.3598 0.0864M0.3468 0.0881L0.3586 0.0911M0.3456 0.0926L0.3574 0.0958M0.3444 0.0971L0.3561 0.1004M0.3431 0.1016L0.3548 0.1051M0.3417 0.1061L0.3534 0.1097M0.3403 0.1106L0.3519 0.1143M0.3388 0.115L0.3504 0.1189M0.3373 0.1194L0.3488 0.1235M0.3357 0.1238L0.3471 0.1281M0.334 0.1282L0.3454 0.1326M0.3323 0.1326L0.3437 0.1371M0.3306 0.1369L0.3418 0.1416M0.3287 0.1412L0.34 0.1461M0.3269 0.1455L0.338 0.1505M0.3249 0.1498L0.336 0.1549M0.3229 0.154L0.334 0.1593M0.3209 0.1583L0.3318 0.1636M0.3188 0.1624L0.3297 0.168M0.3166 0.1666L0.3274 0.1723M0.3144 0.1707L0.3252 0.1765M0.3122 0.1748L0.3228 0.1808M0.3099 0.1789L0.3204 0.185M0.3075 0.1829L0.318 0.1892M0.3051 0.1869L0.3155 0.1933M0.3026 0.1909L0.3129 0.1974M0.3001 0.1949L0.3103 0.2015M0.2975 0.1988L0.3076 0.2056M0.2949 0.2027L0.3049 0.2096M0.2922 0.2065L0.3022 0.2135M0.2895 0.2103L0.2993 0.2175M0.2867 0.2141L0.2965 0.2214M0.2839 0.2178L0.2935 0.2252M0.281 0.2215L0.2906 0.2291M0.2781 0.2252L0.2875 0.2328M0.2751 0.2288L0.2845 0.2366M0.2721 0.2324L0.2814 0.2403M0.269 0.2359L0.2782 0.244M0.2659 0.2394L0.275 0.2476M0.2627 0.2429L0.2717 0.2512M0.2595 0.2463L0.2684 0.2547M0.2563 0.2497L0.265 0.2582M0.253 0.253L0.2616 0.2616M0.2497 0.2563L0.2582 0.265M0.2463 0.2595L0.2547 0.2684M0.2429 0.2627L0.2512 0.2717M0.2394 0.2659L0.2476 0.275M0.2359 0.269L0.244 0.2782M0.2324 0.2721L0.2403 0.2814M0.2288 0.2751L0.2366 0.2845M0.2252 0.2781L0.2328 0.2875M0.2215 0.281L0.2291 0.2906M0.2178 0.2839L0.2252 0.2935M0.2141 0.2867L0.2214 0.2965M0.2103 0.2895L0.2175 0.2993M0.2065 0.2922L0.2135 0.3022M0.2027 0.2949L0.2096 0.3049M0.1988 0.2975L0.2056 0.3076M0.1949 0.3001L0.2015 0.3103M0.1909 0.3026L0.1974 0.3129M0.1869 0.3051L0.1933 0.3155M0.1829 0.3075L0.1892 0.318M0.1789 0.3099L0.185 0.3204M0.1748 0.3122L0.1808 0.3228M0.1707 0.3144L0.1765 0.3252M0.1666 0.3166L0.1723 0.3274M0.1624 0.3188L0.168 0.3297M0.1583 0.3209L0.1636 0.3318M0.154 0.3229L0.1593 0.334M0.1498 0.3249L0.1549 0.336M0.1455 0.3269L0.1505 0.338M0.1412 0.3287L0.1461 0.34M0.1369 0.3306L0.1416 0.3418M0.1326 0.3323L0.1371 0.3437M0.1282 0.334L0.1326 0.3454M0.1238 0.3357L0.1281 0.3471M0.1194 0.3373L0.1235 0.3488M0.115 0.3388L0.1189 0.3504M0.1106 0.3403L0.1143 0.3519M0.1061 0.3417L0.1097 0.3534M0.1016 0.3431L0.1051 0.3548M0.0971 0.3444L0.1004 0.3561M0.0926 0.3456L0.0958 0.3574M0.0881 0.3468L0.0911 0.3586M0.0835 0.3479L0.0864 0.3598M0.079 0.349L0.0817 0.3609M0.0744 0.35L0.0769 0.3619M0.0698 0.3509L0.0722 0.3629M0.0652 0.3518L0.0674 0.3638M0.0606 0.3526L0.0627 0.3647M0.056 0.3534L0.0579 0.3654M0.0513 0.3541L0.0531 0.3662M0.0467 0.3547L0.0483 0.3668M0.0421 0.3553L0.0435 0.3674M0.0374 0.3558L0.0387 0.368M0.0327 0.3563L0.0339 0.3684M0.0281 0.3567L0.029 0.3689M0.0234 0.357L0.0242 0.3692M0.0187 0.3573L0.0194 0.3695M0.014 0.3575L0.0145 0.3697M0.0094 0.3577L0.0097 0.3699M0.0047 0.3578L0.0048 0.37M0 0.3578L0 0.37" stroke="#383c3c" stroke-opacity=".4" stroke-width=".8" fill="none" vector-effect="non-scaling-stroke" shape-rendering="auto"/>
<clipPath id="oc"><path d="M.17 0L.2475 0L.2475 .0147L.316 .0147L.35605 .05455A.3602 .3602 0 0 1 .05455 .35605L.0147 .316L.0147 .2475L0 .2475L0 .17A.17 .17 0 0 0 .17 0Z"/></clipPath>
<path clip-path="url(#oc)" d="M0.188 0A0.188 0.188 0 0 1 0 0.188M0.198 0A0.198 0.198 0 0 1 0 0.198M0.208 0A0.208 0.208 0 0 1 0 0.208M0.218 0A0.218 0.218 0 0 1 0 0.218M0.228 0A0.228 0.228 0 0 1 0 0.228M0.2379 0A0.2379 0.2379 0 0 1 0 0.2379M0.2479 0A0.2479 0.2479 0 0 1 0 0.2479M0.2579 0A0.2579 0.2579 0 0 1 0 0.2579M0.2679 0A0.2679 0.2679 0 0 1 0 0.2679M0.2779 0A0.2779 0.2779 0 0 1 0 0.2779M0.2879 0A0.2879 0.2879 0 0 1 0 0.2879M0.2979 0A0.2979 0.2979 0 0 1 0 0.2979M0.3079 0A0.3079 0.3079 0 0 1 0 0.3079M0.3178 0A0.3178 0.3178 0 0 1 0 0.3178M0.3278 0A0.3278 0.3278 0 0 1 0 0.3278M0.3378 0A0.3378 0.3378 0 0 1 0 0.3378M0.3478 0A0.3478 0.3478 0 0 1 0 0.3478M0.3578 0A0.3578 0.3578 0 0 1 0 0.3578M0.188 0L0.3578 0M0.188 0.0039L0.3577 0.0075M0.1878 0.0079L0.3575 0.015M0.1876 0.0118L0.3571 0.0225M0.1873 0.0157L0.3565 0.0299M0.187 0.0197L0.3558 0.0374M0.1865 0.0236L0.355 0.0448M0.186 0.0275L0.354 0.0523M0.1854 0.0314L0.3528 0.0597M0.1847 0.0352L0.3515 0.067M0.1839 0.0391L0.35 0.0744M0.183 0.0429L0.3483 0.0817M0.1821 0.0468L0.3466 0.089M0.1811 0.0506L0.3446 0.0962M0.18 0.0543L0.3425 0.1034M0.1788 0.0581L0.3403 0.1106M0.1775 0.0618L0.3379 0.1177M0.1762 0.0655L0.3354 0.1247M0.1748 0.0692L0.3327 0.1317M0.1733 0.0729L0.3298 0.1387M0.1717 0.0765L0.3269 0.1455M0.1701 0.08L0.3237 0.1523M0.1684 0.0836L0.3205 0.1591M0.1666 0.0871L0.3171 0.1658M0.1647 0.0906L0.3135 0.1724M0.1628 0.094L0.3099 0.1789M0.1608 0.0974L0.306 0.1854M0.1587 0.1007L0.3021 0.1917M0.1566 0.104L0.298 0.198M0.1544 0.1073L0.2938 0.2042M0.1521 0.1105L0.2895 0.2103M0.1497 0.1137L0.285 0.2163M0.1473 0.1168L0.2804 0.2222M0.1449 0.1198L0.2757 0.2281M0.1423 0.1228L0.2709 0.2338M0.1397 0.1258L0.2659 0.2394M0.137 0.1287L0.2608 0.2449M0.1343 0.1315L0.2556 0.2503M0.1315 0.1343L0.2503 0.2556M0.1287 0.137L0.2449 0.2608M0.1258 0.1397L0.2394 0.2659M0.1228 0.1423L0.2338 0.2709M0.1198 0.1449L0.2281 0.2757M0.1168 0.1473L0.2222 0.2804M0.1137 0.1497L0.2163 0.285M0.1105 0.1521L0.2103 0.2895M0.1073 0.1544L0.2042 0.2938M0.104 0.1566L0.198 0.298M0.1007 0.1587L0.1917 0.3021M0.0974 0.1608L0.1854 0.306M0.094 0.1628L0.1789 0.3099M0.0906 0.1647L0.1724 0.3135M0.0871 0.1666L0.1658 0.3171M0.0836 0.1684L0.1591 0.3205M0.08 0.1701L0.1523 0.3237M0.0765 0.1717L0.1455 0.3269M0.0729 0.1733L0.1387 0.3298M0.0692 0.1748L0.1317 0.3327M0.0655 0.1762L0.1247 0.3354M0.0618 0.1775L0.1177 0.3379M0.0581 0.1788L0.1106 0.3403M0.0543 0.18L0.1034 0.3425M0.0506 0.1811L0.0962 0.3446M0.0468 0.1821L0.089 0.3466M0.0429 0.183L0.0817 0.3483M0.0391 0.1839L0.0744 0.35M0.0352 0.1847L0.067 0.3515M0.0314 0.1854L0.0597 0.3528M0.0275 0.186L0.0523 0.354M0.0236 0.1865L0.0448 0.355M0.0197 0.187L0.0374 0.3558M0.0157 0.1873L0.0299 0.3565M0.0118 0.1876L0.0225 0.3571M0.0079 0.1878L0.015 0.3575M0.0039 0.188L0.0075 0.3577M0 0.188L0 0.3578" stroke="#383c3c" stroke-opacity=".4" stroke-width=".8" fill="none" vector-effect="non-scaling-stroke" shape-rendering="auto"/>
<path d="M0 0L0.188 0A0.188 0.188 0 0 1 0 0.188Z" fill="#3cb400"/>
<path d="M0.0583 0A0.0583 0.0583 0 0 1 0 0.0583M0.1034 0A0.1034 0.1034 0 0 1 0 0.1034M0.141 0A0.141 0.141 0 0 1 0 0.141M0.1654 0A0.1654 0.1654 0 0 1 0 0.1654M0.188 0A0.188 0.188 0 0 1 0 0.188M0.006 0L0.188 0M0.006 0.0003L0.1877 0.0109M0.006 0.0007L0.1867 0.0218M0.0059 0.001L0.1851 0.0326M0.0058 0.0014L0.1829 0.0434M0.0057 0.0017L0.1801 0.0539M0.0056 0.0021L0.1767 0.0643M0.0055 0.0024L0.1726 0.0745M0.0054 0.0027L0.168 0.0844M0.0052 0.003L0.1628 0.094M0.005 0.0033L0.1571 0.1033M0.0048 0.0036L0.1508 0.1123M0.0046 0.0039L0.144 0.1208M0.0044 0.0041L0.1367 0.129M0.0041 0.0044L0.129 0.1367M0.0039 0.0046L0.1208 0.144M0.0036 0.0048L0.1123 0.1508M0.0033 0.005L0.1033 0.1571M0.003 0.0052L0.094 0.1628M0.0027 0.0054L0.0844 0.168M0.0024 0.0055L0.0745 0.1726M0.0021 0.0056L0.0643 0.1767M0.0017 0.0057L0.0539 0.1801M0.0014 0.0058L0.0434 0.1829M0.001 0.0059L0.0326 0.1851M0.0007 0.006L0.0218 0.1867M0.0003 0.006L0.0109 0.1877M0 0.006L0 0.188M0.02 0.0006L0.1034 0.003M0.0199 0.0017L0.103 0.009M0.0198 0.0029L0.1023 0.015M0.0196 0.004L0.1013 0.0209M0.0193 0.0052L0.0999 0.0268M0.019 0.0063L0.0982 0.0325M0.0186 0.0074L0.0961 0.0382M0.0181 0.0085L0.0937 0.0437M0.0176 0.0095L0.091 0.0491M0.017 0.0105L0.088 0.0543M0.0164 0.0115L0.0847 0.0593M0.0157 0.0124L0.0811 0.0641M0.0149 0.0133L0.0772 0.0687M0.0141 0.0141L0.0731 0.0731M0.0133 0.0149L0.0687 0.0772M0.0124 0.0157L0.0641 0.0811M0.0115 0.0164L0.0593 0.0847M0.0105 0.017L0.0543 0.088M0.0095 0.0176L0.0491 0.091M0.0085 0.0181L0.0437 0.0937M0.0074 0.0186L0.0382 0.0961M0.0063 0.019L0.0325 0.0982M0.0052 0.0193L0.0268 0.0999M0.004 0.0196L0.0209 0.1013M0.0029 0.0198L0.015 0.1023M0.0017 0.0199L0.009 0.103M0.0006 0.02L0.003 0.1034" stroke="#383c3c" stroke-opacity=".3" stroke-width=".7" fill="none" vector-effect="non-scaling-stroke" shape-rendering="auto"/>
</g>
<path d="M891.3 987l2 2-2 2-2-2z" fill="#28287c"/>
</svg>
<svg class="abs" style="left:400px;top:860px" width="140" height="90" viewBox="400 860 140 90">
<defs>
<linearGradient id="gz" x1="0" x2="1"><stop offset="0" stop-color="#4848c8"/><stop offset=".45" stop-color="#7070ff"/><stop offset="1" stop-color="#3838a8"/></linearGradient>
<linearGradient id="gx" x1="0" y1="0" x2=".25" y2="1"><stop offset="0" stop-color="#b84040"/><stop offset=".4" stop-color="#ff7070"/><stop offset="1" stop-color="#c04848"/></linearGradient>
<linearGradient id="gy" x1="0" x2="1"><stop offset="0" stop-color="#38a038"/><stop offset=".6" stop-color="#60f060"/><stop offset="1" stop-color="#40c040"/></linearGradient>
</defs>
<path d="M420.300 881.200L420.300 903L435 893z" fill="#40a848"/>
<ellipse cx="427" cy="901" rx="7" ry="6.500" fill="#58e860"/>
<path d="M424 903L431 899L446 931L439 934z" fill="url(#gy)"/>
<path d="M441 937L446 926.500L485 918.500L488 927.700L446 936.800z" fill="url(#gx)"/>
<path d="M484.400 913.300L515 916.200L488.500 931.700z" fill="#f86868"/><path d="M484.400 913.300L486.500 913.500L490 930.800L488.500 931.700z" fill="#a84040"/>
<rect x="437.800" y="903" width="9.800" height="31" rx="2" fill="url(#gz)"/>
<path d="M442.400 879.300L452.300 899.500Q452 903 447.500 905H437.500Q433 903 432.800 899.500z" fill="url(#gz)"/>
<text x="411" y="882" font-family="Liberation Sans, sans-serif" font-size="14.500" fill="#111">Y</text>
<text x="436" y="878.600" font-family="Liberation Sans, sans-serif" font-size="14.500" fill="#111">Z</text>
<text x="516" y="921" font-family="Liberation Sans, sans-serif" font-size="14.500" fill="#111">X</text>
</svg>
</body></html>
